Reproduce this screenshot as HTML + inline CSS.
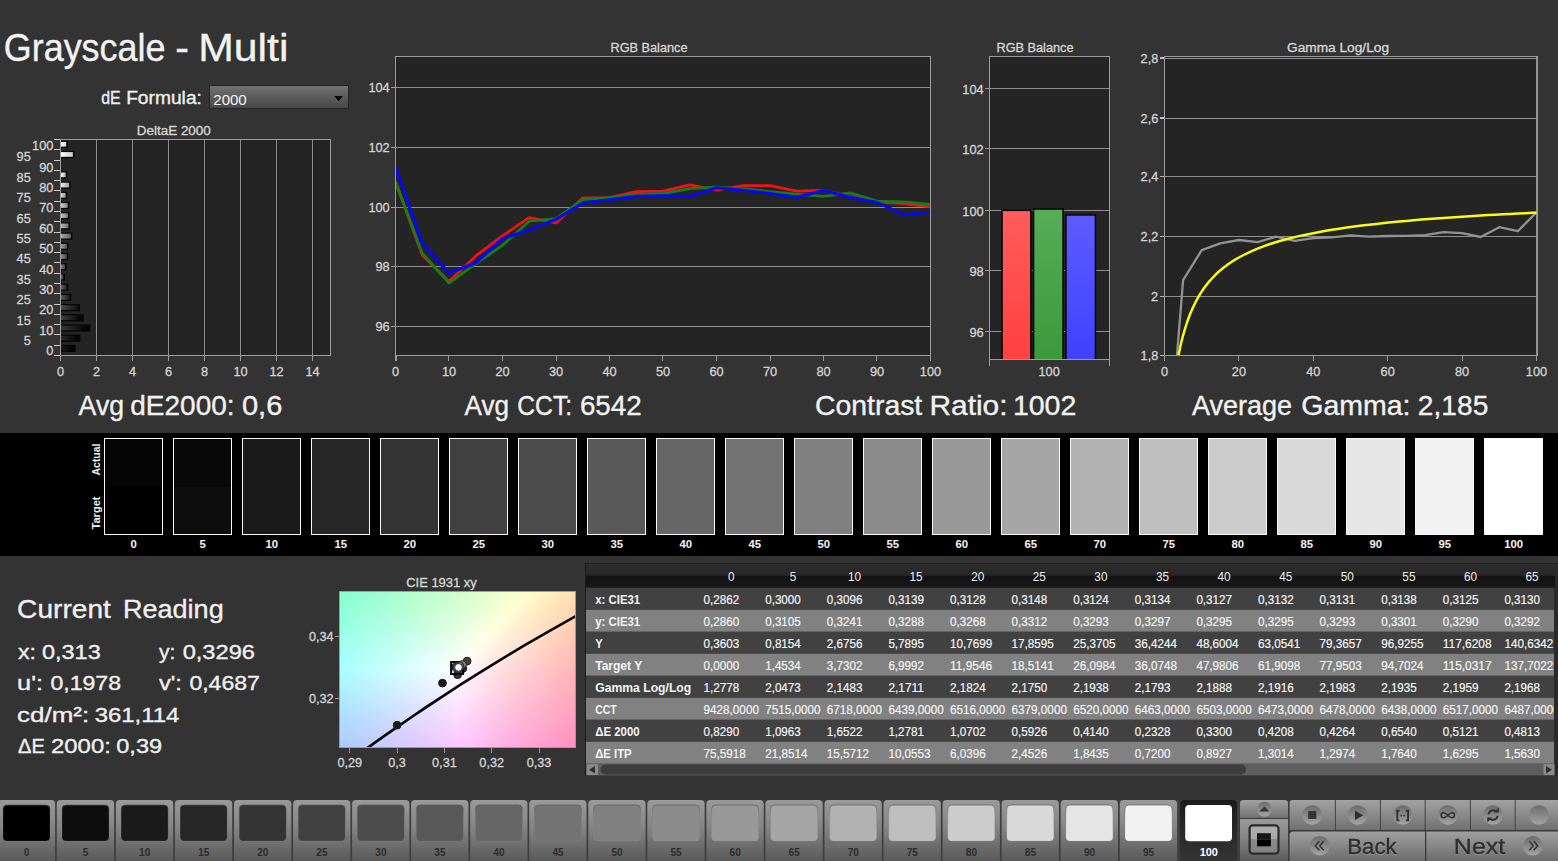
<!DOCTYPE html>
<html lang="en"><head><meta charset="utf-8"><title>Grayscale - Multi</title>
<style>html,body{margin:0;padding:0;background:#333333;overflow:hidden}body{width:1558px;height:861px;font-family:"Liberation Sans", sans-serif}svg{display:block;font-family:"Liberation Sans", sans-serif}</style></head><body>
<svg width="1558" height="861" viewBox="0 0 1558 861">
<defs>
<linearGradient id="gdd" x1="0" y1="0" x2="0" y2="1"><stop offset="0" stop-color="#727272"/><stop offset="1" stop-color="#464646"/></linearGradient>
<linearGradient id="gr" x1="0" y1="0" x2="0" y2="1"><stop offset="0" stop-color="#ff5c5c"/><stop offset="1" stop-color="#ff4040"/></linearGradient>
<linearGradient id="gg" x1="0" y1="0" x2="0" y2="1"><stop offset="0" stop-color="#58ac58"/><stop offset="1" stop-color="#3a9a3a"/></linearGradient>
<linearGradient id="gb" x1="0" y1="0" x2="0" y2="1"><stop offset="0" stop-color="#5c5cff"/><stop offset="1" stop-color="#4040ff"/></linearGradient>
<linearGradient id="gbtn" x1="0" y1="0" x2="0" y2="1"><stop offset="0" stop-color="#9a9a9a"/><stop offset="0.45" stop-color="#848484"/><stop offset="1" stop-color="#5a5a5a"/></linearGradient>
<linearGradient id="gbtn2" x1="0" y1="0" x2="0" y2="1"><stop offset="0" stop-color="#8e8e8e"/><stop offset="1" stop-color="#666666"/></linearGradient>
<linearGradient id="gsel" x1="0" y1="0" x2="0" y2="1"><stop offset="0" stop-color="#1c1c1c"/><stop offset="1" stop-color="#343434"/></linearGradient>
<linearGradient id="ghead" x1="0" y1="0" x2="0" y2="1"><stop offset="0" stop-color="#2e2e2e"/><stop offset="0.48" stop-color="#262626"/><stop offset="0.52" stop-color="#121212"/><stop offset="1" stop-color="#181818"/></linearGradient>
<linearGradient id="gcirc" x1="0" y1="0" x2="0" y2="1"><stop offset="0" stop-color="#6c6c6c"/><stop offset="1" stop-color="#a4a4a4"/></linearGradient>
<linearGradient id="gbtnT" x1="0" y1="0" x2="0" y2="1"><stop offset="0" stop-color="#a2a2a2"/><stop offset="1" stop-color="#707070"/></linearGradient>
<linearGradient id="gbtnB" x1="0" y1="0" x2="0" y2="1"><stop offset="0" stop-color="#a0a0a0"/><stop offset="1" stop-color="#6c6c6c"/></linearGradient>
<linearGradient id="gstop" x1="0" y1="0" x2="0" y2="1"><stop offset="0" stop-color="#b0b0b0"/><stop offset="0.5" stop-color="#a6a6a6"/><stop offset="0.5" stop-color="#8a8a8a"/><stop offset="1" stop-color="#828282"/></linearGradient>
<linearGradient id="gins" x1="0" y1="0" x2="0" y2="1"><stop offset="0" stop-color="#555" stop-opacity="0.7"/><stop offset="0.3" stop-color="#777" stop-opacity="0.3"/><stop offset="1" stop-color="#999" stop-opacity="0.15"/></linearGradient>
<linearGradient id="cieH" x1="0" y1="0" x2="1" y2="0"><stop offset="0" stop-color="#8cf6d2"/><stop offset="0.45" stop-color="#e6ffe6"/><stop offset="0.7" stop-color="#ffffd8"/><stop offset="1" stop-color="#ffe2b8"/></linearGradient>
<linearGradient id="cieB" x1="0" y1="0" x2="1" y2="0"><stop offset="0" stop-color="#a6c8ff"/><stop offset="0.5" stop-color="#f4c8ff"/><stop offset="1" stop-color="#ff86a8"/></linearGradient>
<linearGradient id="cieM" x1="0" y1="0" x2="0" y2="1"><stop offset="0" stop-color="#fff" stop-opacity="0"/><stop offset="0.5" stop-color="#fff" stop-opacity="1"/><stop offset="1" stop-color="#fff" stop-opacity="0"/></linearGradient>
<linearGradient id="cieV" x1="0" y1="0" x2="0" y2="1"><stop offset="0" stop-color="#fff"/><stop offset="1" stop-color="#000"/></linearGradient>
<mask id="mTop"><rect x="340" y="592" width="236" height="156" fill="url(#cieV)"/></mask>
<radialGradient id="cieW" cx="0.5" cy="0.52" r="0.45"><stop offset="0" stop-color="#fff" stop-opacity="1"/><stop offset="0.25" stop-color="#fff" stop-opacity="0.85"/><stop offset="1" stop-color="#fff" stop-opacity="0"/></radialGradient>
<clipPath id="cRGB"><rect x="396" y="57" width="534" height="298"/></clipPath>
<clipPath id="cGAM"><rect x="1165" y="57" width="372" height="298"/></clipPath>
<clipPath id="cCIE"><rect x="340" y="592" width="235.5" height="155.5"/></clipPath>
<filter id="sh" x="-10%" y="-20%" width="120%" height="150%" color-interpolation-filters="sRGB"><feDropShadow dx="0" dy="0.9" stdDeviation="0.15" flood-color="#b8b8b8" flood-opacity="0.6"/></filter>
</defs>
<rect x="0.00" y="0.00" width="1558.00" height="861.00" fill="#333333" />
<text y="61.0" font-size="38" fill="#f2f2f2" stroke="#f2f2f2" stroke-width="0.35"><tspan x="3.75" textLength="161.75" lengthAdjust="spacingAndGlyphs">Grayscale</tspan> <tspan x="175.20" textLength="13.70" lengthAdjust="spacingAndGlyphs">-</tspan> <tspan x="198.15" textLength="90.25" lengthAdjust="spacingAndGlyphs">Multi</tspan></text>
<text y="104.3" font-size="18" fill="#f0f0f0" stroke="#f0f0f0" stroke-width="0.35"><tspan x="101.20" textLength="19.40" lengthAdjust="spacingAndGlyphs">dE</tspan> <tspan x="126.15" textLength="75.75" lengthAdjust="spacingAndGlyphs">Formula:</tspan></text>
<rect x="209.50" y="85.50" width="138.50" height="23.00" fill="url(#gdd)" stroke="#262626" stroke-width="1" shape-rendering="crispEdges"/>
<text x="213.3" y="104.8" font-size="14.6" fill="#f4f4f4" textLength="33.4" lengthAdjust="spacingAndGlyphs">2000</text>
<path d="M334.3 96h8.600l-4.300 5.200z" fill="#060606"/>
<text x="173.8" y="134.8" font-size="12" fill="#d6d6d6" text-anchor="middle" textLength="74.0" lengthAdjust="spacingAndGlyphs" stroke="#d6d6d6" stroke-width="0.3">DeltaE 2000</text>
<rect x="60.50" y="139.50" width="270.00" height="216.00" fill="#242424" />
<g shape-rendering="crispEdges">
<line x1="96.50" y1="139.50" x2="96.50" y2="355.50" stroke="#8e8e8e" stroke-width="1" />
<line x1="132.50" y1="139.50" x2="132.50" y2="355.50" stroke="#8e8e8e" stroke-width="1" />
<line x1="168.50" y1="139.50" x2="168.50" y2="355.50" stroke="#8e8e8e" stroke-width="1" />
<line x1="204.50" y1="139.50" x2="204.50" y2="355.50" stroke="#8e8e8e" stroke-width="1" />
<line x1="240.50" y1="139.50" x2="240.50" y2="355.50" stroke="#8e8e8e" stroke-width="1" />
<line x1="276.50" y1="139.50" x2="276.50" y2="355.50" stroke="#8e8e8e" stroke-width="1" />
<line x1="312.50" y1="139.50" x2="312.50" y2="355.50" stroke="#8e8e8e" stroke-width="1" />
<rect x="60.50" y="139.50" width="270.00" height="216.00" fill="none" stroke="#9c9c9c" stroke-width="1"/>
<line x1="60.50" y1="355.50" x2="60.50" y2="361.00" stroke="#9c9c9c" stroke-width="1" />
<line x1="96.50" y1="355.50" x2="96.50" y2="361.00" stroke="#9c9c9c" stroke-width="1" />
<line x1="132.50" y1="355.50" x2="132.50" y2="361.00" stroke="#9c9c9c" stroke-width="1" />
<line x1="168.50" y1="355.50" x2="168.50" y2="361.00" stroke="#9c9c9c" stroke-width="1" />
<line x1="204.50" y1="355.50" x2="204.50" y2="361.00" stroke="#9c9c9c" stroke-width="1" />
<line x1="240.50" y1="355.50" x2="240.50" y2="361.00" stroke="#9c9c9c" stroke-width="1" />
<line x1="276.50" y1="355.50" x2="276.50" y2="361.00" stroke="#9c9c9c" stroke-width="1" />
<line x1="312.50" y1="355.50" x2="312.50" y2="361.00" stroke="#9c9c9c" stroke-width="1" />
<line x1="54.00" y1="355.50" x2="60.00" y2="355.50" stroke="#c8c8c8" stroke-width="1" />
<line x1="54.00" y1="345.50" x2="60.00" y2="345.50" stroke="#c8c8c8" stroke-width="1" />
<line x1="54.00" y1="334.50" x2="60.00" y2="334.50" stroke="#c8c8c8" stroke-width="1" />
<line x1="54.00" y1="324.50" x2="60.00" y2="324.50" stroke="#c8c8c8" stroke-width="1" />
<line x1="54.00" y1="314.50" x2="60.00" y2="314.50" stroke="#c8c8c8" stroke-width="1" />
<line x1="54.00" y1="304.50" x2="60.00" y2="304.50" stroke="#c8c8c8" stroke-width="1" />
<line x1="54.00" y1="293.50" x2="60.00" y2="293.50" stroke="#c8c8c8" stroke-width="1" />
<line x1="54.00" y1="283.50" x2="60.00" y2="283.50" stroke="#c8c8c8" stroke-width="1" />
<line x1="54.00" y1="273.50" x2="60.00" y2="273.50" stroke="#c8c8c8" stroke-width="1" />
<line x1="54.00" y1="262.50" x2="60.00" y2="262.50" stroke="#c8c8c8" stroke-width="1" />
<line x1="54.00" y1="252.50" x2="60.00" y2="252.50" stroke="#c8c8c8" stroke-width="1" />
<line x1="54.00" y1="242.50" x2="60.00" y2="242.50" stroke="#c8c8c8" stroke-width="1" />
<line x1="54.00" y1="232.50" x2="60.00" y2="232.50" stroke="#c8c8c8" stroke-width="1" />
<line x1="54.00" y1="221.50" x2="60.00" y2="221.50" stroke="#c8c8c8" stroke-width="1" />
<line x1="54.00" y1="211.50" x2="60.00" y2="211.50" stroke="#c8c8c8" stroke-width="1" />
<line x1="54.00" y1="201.50" x2="60.00" y2="201.50" stroke="#c8c8c8" stroke-width="1" />
<line x1="54.00" y1="190.50" x2="60.00" y2="190.50" stroke="#c8c8c8" stroke-width="1" />
<line x1="54.00" y1="180.50" x2="60.00" y2="180.50" stroke="#c8c8c8" stroke-width="1" />
<line x1="54.00" y1="170.50" x2="60.00" y2="170.50" stroke="#c8c8c8" stroke-width="1" />
<line x1="54.00" y1="160.50" x2="60.00" y2="160.50" stroke="#c8c8c8" stroke-width="1" />
<line x1="54.00" y1="149.50" x2="60.00" y2="149.50" stroke="#c8c8c8" stroke-width="1" />
<line x1="54.00" y1="139.50" x2="60.00" y2="139.50" stroke="#c8c8c8" stroke-width="1" />
</g>
<text x="60.5" y="375.7" font-size="12.4" fill="#d4d4d4" text-anchor="middle" textLength="7.1" lengthAdjust="spacingAndGlyphs" stroke="#d4d4d4" stroke-width="0.3">0</text>
<text x="96.5" y="375.7" font-size="12.4" fill="#d4d4d4" text-anchor="middle" textLength="7.1" lengthAdjust="spacingAndGlyphs" stroke="#d4d4d4" stroke-width="0.3">2</text>
<text x="132.5" y="375.7" font-size="12.4" fill="#d4d4d4" text-anchor="middle" textLength="7.1" lengthAdjust="spacingAndGlyphs" stroke="#d4d4d4" stroke-width="0.3">4</text>
<text x="168.5" y="375.7" font-size="12.4" fill="#d4d4d4" text-anchor="middle" textLength="7.1" lengthAdjust="spacingAndGlyphs" stroke="#d4d4d4" stroke-width="0.3">6</text>
<text x="204.5" y="375.7" font-size="12.4" fill="#d4d4d4" text-anchor="middle" textLength="7.1" lengthAdjust="spacingAndGlyphs" stroke="#d4d4d4" stroke-width="0.3">8</text>
<text x="240.5" y="375.7" font-size="12.4" fill="#d4d4d4" text-anchor="middle" textLength="14.2" lengthAdjust="spacingAndGlyphs" stroke="#d4d4d4" stroke-width="0.3">10</text>
<text x="276.5" y="375.7" font-size="12.4" fill="#d4d4d4" text-anchor="middle" textLength="14.2" lengthAdjust="spacingAndGlyphs" stroke="#d4d4d4" stroke-width="0.3">12</text>
<text x="312.5" y="375.7" font-size="12.4" fill="#d4d4d4" text-anchor="middle" textLength="14.2" lengthAdjust="spacingAndGlyphs" stroke="#d4d4d4" stroke-width="0.3">14</text>
<linearGradient id="db0" x1="0" y1="0" x2="1" y2="0"><stop offset="0" stop-color="rgb(28,28,28)"/><stop offset="1" stop-color="rgb(0,0,0)"/></linearGradient>
<rect x="61.00" y="344.80" width="14.62" height="7.20" fill="#050505" />
<rect x="61.00" y="346.00" width="13.12" height="4.70" fill="url(#db0)" />
<text x="53.4" y="355.1" font-size="12.4" fill="#d4d4d4" text-anchor="end" textLength="7.1" lengthAdjust="spacingAndGlyphs" stroke="#d4d4d4" stroke-width="0.3">0</text>
<linearGradient id="db1" x1="0" y1="0" x2="1" y2="0"><stop offset="0" stop-color="rgb(41,41,41)"/><stop offset="1" stop-color="rgb(0,0,0)"/></linearGradient>
<rect x="61.00" y="334.59" width="19.43" height="7.20" fill="#050505" />
<rect x="61.00" y="335.80" width="17.93" height="4.70" fill="url(#db1)" />
<text x="30.8" y="344.9" font-size="12.4" fill="#d4d4d4" text-anchor="end" textLength="7.1" lengthAdjust="spacingAndGlyphs" stroke="#d4d4d4" stroke-width="0.3">5</text>
<linearGradient id="db2" x1="0" y1="0" x2="1" y2="0"><stop offset="0" stop-color="rgb(54,54,54)"/><stop offset="1" stop-color="rgb(0,0,0)"/></linearGradient>
<rect x="61.00" y="324.39" width="29.44" height="7.20" fill="#050505" />
<rect x="61.00" y="325.59" width="27.94" height="4.70" fill="url(#db2)" />
<text x="53.4" y="334.7" font-size="12.4" fill="#d4d4d4" text-anchor="end" textLength="14.2" lengthAdjust="spacingAndGlyphs" stroke="#d4d4d4" stroke-width="0.3">10</text>
<linearGradient id="db3" x1="0" y1="0" x2="1" y2="0"><stop offset="0" stop-color="rgb(66,66,66)"/><stop offset="1" stop-color="rgb(0,0,0)"/></linearGradient>
<rect x="61.00" y="314.18" width="22.71" height="7.20" fill="#050505" />
<rect x="61.00" y="315.38" width="21.21" height="4.70" fill="url(#db3)" />
<text x="30.8" y="324.5" font-size="12.4" fill="#d4d4d4" text-anchor="end" textLength="14.2" lengthAdjust="spacingAndGlyphs" stroke="#d4d4d4" stroke-width="0.3">15</text>
<linearGradient id="db4" x1="0" y1="0" x2="1" y2="0"><stop offset="0" stop-color="rgb(79,79,79)"/><stop offset="1" stop-color="rgb(11,11,11)"/></linearGradient>
<rect x="61.00" y="303.98" width="18.96" height="7.20" fill="#050505" />
<rect x="61.00" y="305.18" width="17.46" height="4.70" fill="url(#db4)" />
<text x="53.4" y="314.3" font-size="12.4" fill="#d4d4d4" text-anchor="end" textLength="14.2" lengthAdjust="spacingAndGlyphs" stroke="#d4d4d4" stroke-width="0.3">20</text>
<linearGradient id="db5" x1="0" y1="0" x2="1" y2="0"><stop offset="0" stop-color="rgb(92,92,92)"/><stop offset="1" stop-color="rgb(24,24,24)"/></linearGradient>
<rect x="61.00" y="293.77" width="10.37" height="7.20" fill="#050505" />
<rect x="61.00" y="294.98" width="8.87" height="4.70" fill="url(#db5)" />
<text x="30.8" y="304.1" font-size="12.4" fill="#d4d4d4" text-anchor="end" textLength="14.2" lengthAdjust="spacingAndGlyphs" stroke="#d4d4d4" stroke-width="0.3">25</text>
<linearGradient id="db6" x1="0" y1="0" x2="1" y2="0"><stop offset="0" stop-color="rgb(104,104,104)"/><stop offset="1" stop-color="rgb(36,36,36)"/></linearGradient>
<rect x="61.00" y="283.57" width="7.15" height="7.20" fill="#050505" />
<rect x="61.00" y="284.77" width="5.65" height="4.70" fill="url(#db6)" />
<text x="53.4" y="293.9" font-size="12.4" fill="#d4d4d4" text-anchor="end" textLength="14.2" lengthAdjust="spacingAndGlyphs" stroke="#d4d4d4" stroke-width="0.3">30</text>
<linearGradient id="db7" x1="0" y1="0" x2="1" y2="0"><stop offset="0" stop-color="rgb(117,117,117)"/><stop offset="1" stop-color="rgb(49,49,49)"/></linearGradient>
<rect x="61.00" y="273.36" width="3.89" height="7.20" fill="#050505" />
<rect x="61.00" y="274.56" width="2.39" height="4.70" fill="url(#db7)" />
<text x="30.8" y="283.7" font-size="12.4" fill="#d4d4d4" text-anchor="end" textLength="14.2" lengthAdjust="spacingAndGlyphs" stroke="#d4d4d4" stroke-width="0.3">35</text>
<linearGradient id="db8" x1="0" y1="0" x2="1" y2="0"><stop offset="0" stop-color="rgb(130,130,130)"/><stop offset="1" stop-color="rgb(62,62,62)"/></linearGradient>
<rect x="61.00" y="263.16" width="5.64" height="7.20" fill="#050505" />
<rect x="61.00" y="264.36" width="4.14" height="4.70" fill="url(#db8)" />
<text x="53.4" y="273.5" font-size="12.4" fill="#d4d4d4" text-anchor="end" textLength="14.2" lengthAdjust="spacingAndGlyphs" stroke="#d4d4d4" stroke-width="0.3">40</text>
<linearGradient id="db9" x1="0" y1="0" x2="1" y2="0"><stop offset="0" stop-color="rgb(143,143,143)"/><stop offset="1" stop-color="rgb(75,75,75)"/></linearGradient>
<rect x="61.00" y="252.95" width="7.27" height="7.20" fill="#050505" />
<rect x="61.00" y="254.15" width="5.77" height="4.70" fill="url(#db9)" />
<text x="30.8" y="263.3" font-size="12.4" fill="#d4d4d4" text-anchor="end" textLength="14.2" lengthAdjust="spacingAndGlyphs" stroke="#d4d4d4" stroke-width="0.3">45</text>
<linearGradient id="db10" x1="0" y1="0" x2="1" y2="0"><stop offset="0" stop-color="rgb(156,156,156)"/><stop offset="1" stop-color="rgb(88,88,88)"/></linearGradient>
<rect x="61.00" y="242.75" width="7.38" height="7.20" fill="#050505" />
<rect x="61.00" y="243.95" width="5.88" height="4.70" fill="url(#db10)" />
<text x="53.4" y="253.1" font-size="12.4" fill="#d4d4d4" text-anchor="end" textLength="14.2" lengthAdjust="spacingAndGlyphs" stroke="#d4d4d4" stroke-width="0.3">50</text>
<linearGradient id="db11" x1="0" y1="0" x2="1" y2="0"><stop offset="0" stop-color="rgb(168,168,168)"/><stop offset="1" stop-color="rgb(100,100,100)"/></linearGradient>
<rect x="61.00" y="232.54" width="11.47" height="7.20" fill="#050505" />
<rect x="61.00" y="233.74" width="9.97" height="4.70" fill="url(#db11)" />
<text x="30.8" y="242.9" font-size="12.4" fill="#d4d4d4" text-anchor="end" textLength="14.2" lengthAdjust="spacingAndGlyphs" stroke="#d4d4d4" stroke-width="0.3">55</text>
<linearGradient id="db12" x1="0" y1="0" x2="1" y2="0"><stop offset="0" stop-color="rgb(181,181,181)"/><stop offset="1" stop-color="rgb(113,113,113)"/></linearGradient>
<rect x="61.00" y="222.34" width="8.92" height="7.20" fill="#050505" />
<rect x="61.00" y="223.54" width="7.42" height="4.70" fill="url(#db12)" />
<text x="53.4" y="232.7" font-size="12.4" fill="#d4d4d4" text-anchor="end" textLength="14.2" lengthAdjust="spacingAndGlyphs" stroke="#d4d4d4" stroke-width="0.3">60</text>
<linearGradient id="db13" x1="0" y1="0" x2="1" y2="0"><stop offset="0" stop-color="rgb(194,194,194)"/><stop offset="1" stop-color="rgb(126,126,126)"/></linearGradient>
<rect x="61.00" y="212.13" width="8.36" height="7.20" fill="#050505" />
<rect x="61.00" y="213.33" width="6.86" height="4.70" fill="url(#db13)" />
<text x="30.8" y="222.5" font-size="12.4" fill="#d4d4d4" text-anchor="end" textLength="14.2" lengthAdjust="spacingAndGlyphs" stroke="#d4d4d4" stroke-width="0.3">65</text>
<linearGradient id="db14" x1="0" y1="0" x2="1" y2="0"><stop offset="0" stop-color="rgb(206,206,206)"/><stop offset="1" stop-color="rgb(138,138,138)"/></linearGradient>
<rect x="61.00" y="201.93" width="8.16" height="7.20" fill="#050505" />
<rect x="61.00" y="203.13" width="6.66" height="4.70" fill="url(#db14)" />
<text x="53.4" y="212.3" font-size="12.4" fill="#d4d4d4" text-anchor="end" textLength="14.2" lengthAdjust="spacingAndGlyphs" stroke="#d4d4d4" stroke-width="0.3">70</text>
<linearGradient id="db15" x1="0" y1="0" x2="1" y2="0"><stop offset="0" stop-color="rgb(219,219,219)"/><stop offset="1" stop-color="rgb(151,151,151)"/></linearGradient>
<rect x="61.00" y="191.72" width="6.18" height="7.20" fill="#050505" />
<rect x="61.00" y="192.92" width="4.68" height="4.70" fill="url(#db15)" />
<text x="30.8" y="202.1" font-size="12.4" fill="#d4d4d4" text-anchor="end" textLength="14.2" lengthAdjust="spacingAndGlyphs" stroke="#d4d4d4" stroke-width="0.3">75</text>
<linearGradient id="db16" x1="0" y1="0" x2="1" y2="0"><stop offset="0" stop-color="rgb(232,232,232)"/><stop offset="1" stop-color="rgb(164,164,164)"/></linearGradient>
<rect x="61.00" y="181.52" width="9.60" height="7.20" fill="#050505" />
<rect x="61.00" y="182.72" width="8.10" height="4.70" fill="url(#db16)" />
<text x="53.4" y="191.9" font-size="12.4" fill="#d4d4d4" text-anchor="end" textLength="14.2" lengthAdjust="spacingAndGlyphs" stroke="#d4d4d4" stroke-width="0.3">80</text>
<linearGradient id="db17" x1="0" y1="0" x2="1" y2="0"><stop offset="0" stop-color="rgb(245,245,245)"/><stop offset="1" stop-color="rgb(177,177,177)"/></linearGradient>
<rect x="61.00" y="171.31" width="6.18" height="7.20" fill="#050505" />
<rect x="61.00" y="172.51" width="4.68" height="4.70" fill="url(#db17)" />
<text x="30.8" y="181.7" font-size="12.4" fill="#d4d4d4" text-anchor="end" textLength="14.2" lengthAdjust="spacingAndGlyphs" stroke="#d4d4d4" stroke-width="0.3">85</text>
<linearGradient id="db18" x1="0" y1="0" x2="1" y2="0"><stop offset="0" stop-color="rgb(255,255,255)"/><stop offset="1" stop-color="rgb(190,190,190)"/></linearGradient>
<text x="53.4" y="171.5" font-size="12.4" fill="#d4d4d4" text-anchor="end" textLength="14.2" lengthAdjust="spacingAndGlyphs" stroke="#d4d4d4" stroke-width="0.3">90</text>
<linearGradient id="db19" x1="0" y1="0" x2="1" y2="0"><stop offset="0" stop-color="rgb(255,255,255)"/><stop offset="1" stop-color="rgb(202,202,202)"/></linearGradient>
<rect x="61.00" y="150.90" width="13.38" height="7.20" fill="#050505" />
<rect x="61.00" y="152.10" width="11.88" height="4.70" fill="url(#db19)" />
<text x="30.8" y="161.3" font-size="12.4" fill="#d4d4d4" text-anchor="end" textLength="14.2" lengthAdjust="spacingAndGlyphs" stroke="#d4d4d4" stroke-width="0.3">95</text>
<linearGradient id="db20" x1="0" y1="0" x2="1" y2="0"><stop offset="0" stop-color="rgb(255,255,255)"/><stop offset="1" stop-color="rgb(215,215,215)"/></linearGradient>
<rect x="61.00" y="140.70" width="6.72" height="7.20" fill="#050505" />
<rect x="61.00" y="141.90" width="5.22" height="4.70" fill="url(#db20)" />
<text x="53.4" y="149.9" font-size="12.4" fill="#d4d4d4" text-anchor="end" textLength="21.3" lengthAdjust="spacingAndGlyphs" stroke="#d4d4d4" stroke-width="0.3">100</text>
<text x="649.0" y="51.7" font-size="12" fill="#d6d6d6" text-anchor="middle" textLength="77.0" lengthAdjust="spacingAndGlyphs" stroke="#d6d6d6" stroke-width="0.3">RGB Balance</text>
<rect x="395.50" y="56.50" width="535.00" height="299.00" fill="#242424" />
<g shape-rendering="crispEdges">
<line x1="395.50" y1="326.50" x2="930.50" y2="326.50" stroke="#8e8e8e" stroke-width="1" />
<line x1="390.50" y1="326.50" x2="395.50" y2="326.50" stroke="#9c9c9c" stroke-width="1" />
<line x1="395.50" y1="266.50" x2="930.50" y2="266.50" stroke="#8e8e8e" stroke-width="1" />
<line x1="390.50" y1="266.50" x2="395.50" y2="266.50" stroke="#9c9c9c" stroke-width="1" />
<line x1="395.50" y1="207.50" x2="930.50" y2="207.50" stroke="#8e8e8e" stroke-width="1" />
<line x1="390.50" y1="207.50" x2="395.50" y2="207.50" stroke="#9c9c9c" stroke-width="1" />
<line x1="395.50" y1="147.50" x2="930.50" y2="147.50" stroke="#8e8e8e" stroke-width="1" />
<line x1="390.50" y1="147.50" x2="395.50" y2="147.50" stroke="#9c9c9c" stroke-width="1" />
<line x1="395.50" y1="87.50" x2="930.50" y2="87.50" stroke="#8e8e8e" stroke-width="1" />
<line x1="390.50" y1="87.50" x2="395.50" y2="87.50" stroke="#9c9c9c" stroke-width="1" />
</g>
<text x="389.7" y="330.9" font-size="12.4" fill="#d4d4d4" text-anchor="end" textLength="14.2" lengthAdjust="spacingAndGlyphs" stroke="#d4d4d4" stroke-width="0.3">96</text>
<text x="389.7" y="270.9" font-size="12.4" fill="#d4d4d4" text-anchor="end" textLength="14.2" lengthAdjust="spacingAndGlyphs" stroke="#d4d4d4" stroke-width="0.3">98</text>
<text x="389.7" y="211.9" font-size="12.4" fill="#d4d4d4" text-anchor="end" textLength="21.3" lengthAdjust="spacingAndGlyphs" stroke="#d4d4d4" stroke-width="0.3">100</text>
<text x="389.7" y="151.9" font-size="12.4" fill="#d4d4d4" text-anchor="end" textLength="21.3" lengthAdjust="spacingAndGlyphs" stroke="#d4d4d4" stroke-width="0.3">102</text>
<text x="389.7" y="91.9" font-size="12.4" fill="#d4d4d4" text-anchor="end" textLength="21.3" lengthAdjust="spacingAndGlyphs" stroke="#d4d4d4" stroke-width="0.3">104</text>
<polyline points="395.5,181.8 422.2,255.0 449.0,281.6 475.8,255.9 502.5,235.9 529.2,217.7 556.0,223.0 582.8,197.9 609.5,197.6 636.2,191.7 663.0,191.1 689.8,184.8 716.5,190.2 743.2,185.7 770.0,185.7 796.8,191.1 823.5,190.5 850.2,196.4 877.0,202.1 903.8,203.6 930.5,206.9" fill="none" stroke="#f21212" stroke-width="2.8" stroke-linejoin="round" clip-path="url(#cRGB)"/>
<polyline points="395.5,181.8 422.2,253.2 449.0,283.1 475.8,263.7 502.5,245.4 529.2,221.2 556.0,218.6 582.8,199.7 609.5,197.6 636.2,194.4 663.0,193.5 689.8,188.7 716.5,187.2 743.2,188.7 770.0,191.7 796.8,194.1 823.5,196.4 850.2,192.9 877.0,201.2 903.8,201.8 930.5,204.5" fill="none" stroke="#187c18" stroke-width="2.8" stroke-linejoin="round" clip-path="url(#cRGB)"/>
<polyline points="395.5,166.9 422.2,243.3 449.0,273.2 475.8,262.8 502.5,238.6 529.2,229.9 556.0,219.4 582.8,203.0 609.5,199.7 636.2,196.4 663.0,195.9 689.8,196.4 716.5,187.8 743.2,190.2 770.0,193.5 796.8,197.3 823.5,190.5 850.2,197.3 877.0,202.4 903.8,214.7 930.5,212.0" fill="none" stroke="#0808f0" stroke-width="3.1" stroke-linejoin="round" clip-path="url(#cRGB)"/>
<g shape-rendering="crispEdges">
<rect x="395.50" y="56.50" width="535.00" height="299.00" fill="none" stroke="#9c9c9c" stroke-width="1"/>
<line x1="395.50" y1="355.50" x2="395.50" y2="361.00" stroke="#9c9c9c" stroke-width="1" />
<line x1="448.50" y1="355.50" x2="448.50" y2="361.00" stroke="#9c9c9c" stroke-width="1" />
<line x1="502.50" y1="355.50" x2="502.50" y2="361.00" stroke="#9c9c9c" stroke-width="1" />
<line x1="556.50" y1="355.50" x2="556.50" y2="361.00" stroke="#9c9c9c" stroke-width="1" />
<line x1="609.50" y1="355.50" x2="609.50" y2="361.00" stroke="#9c9c9c" stroke-width="1" />
<line x1="662.50" y1="355.50" x2="662.50" y2="361.00" stroke="#9c9c9c" stroke-width="1" />
<line x1="716.50" y1="355.50" x2="716.50" y2="361.00" stroke="#9c9c9c" stroke-width="1" />
<line x1="770.50" y1="355.50" x2="770.50" y2="361.00" stroke="#9c9c9c" stroke-width="1" />
<line x1="823.50" y1="355.50" x2="823.50" y2="361.00" stroke="#9c9c9c" stroke-width="1" />
<line x1="876.50" y1="355.50" x2="876.50" y2="361.00" stroke="#9c9c9c" stroke-width="1" />
<line x1="930.50" y1="355.50" x2="930.50" y2="361.00" stroke="#9c9c9c" stroke-width="1" />
<line x1="396.50" y1="355.50" x2="396.50" y2="361.00" stroke="#9c9c9c" stroke-width="1" />
</g>
<text x="395.5" y="375.7" font-size="12.4" fill="#d4d4d4" text-anchor="middle" textLength="7.1" lengthAdjust="spacingAndGlyphs" stroke="#d4d4d4" stroke-width="0.3">0</text>
<text x="449.0" y="375.7" font-size="12.4" fill="#d4d4d4" text-anchor="middle" textLength="14.2" lengthAdjust="spacingAndGlyphs" stroke="#d4d4d4" stroke-width="0.3">10</text>
<text x="502.5" y="375.7" font-size="12.4" fill="#d4d4d4" text-anchor="middle" textLength="14.2" lengthAdjust="spacingAndGlyphs" stroke="#d4d4d4" stroke-width="0.3">20</text>
<text x="556.0" y="375.7" font-size="12.4" fill="#d4d4d4" text-anchor="middle" textLength="14.2" lengthAdjust="spacingAndGlyphs" stroke="#d4d4d4" stroke-width="0.3">30</text>
<text x="609.5" y="375.7" font-size="12.4" fill="#d4d4d4" text-anchor="middle" textLength="14.2" lengthAdjust="spacingAndGlyphs" stroke="#d4d4d4" stroke-width="0.3">40</text>
<text x="663.0" y="375.7" font-size="12.4" fill="#d4d4d4" text-anchor="middle" textLength="14.2" lengthAdjust="spacingAndGlyphs" stroke="#d4d4d4" stroke-width="0.3">50</text>
<text x="716.5" y="375.7" font-size="12.4" fill="#d4d4d4" text-anchor="middle" textLength="14.2" lengthAdjust="spacingAndGlyphs" stroke="#d4d4d4" stroke-width="0.3">60</text>
<text x="770.0" y="375.7" font-size="12.4" fill="#d4d4d4" text-anchor="middle" textLength="14.2" lengthAdjust="spacingAndGlyphs" stroke="#d4d4d4" stroke-width="0.3">70</text>
<text x="823.5" y="375.7" font-size="12.4" fill="#d4d4d4" text-anchor="middle" textLength="14.2" lengthAdjust="spacingAndGlyphs" stroke="#d4d4d4" stroke-width="0.3">80</text>
<text x="877.0" y="375.7" font-size="12.4" fill="#d4d4d4" text-anchor="middle" textLength="14.2" lengthAdjust="spacingAndGlyphs" stroke="#d4d4d4" stroke-width="0.3">90</text>
<text x="930.5" y="375.7" font-size="12.4" fill="#d4d4d4" text-anchor="middle" textLength="21.3" lengthAdjust="spacingAndGlyphs" stroke="#d4d4d4" stroke-width="0.3">100</text>
<text x="1035.0" y="51.7" font-size="12" fill="#d6d6d6" text-anchor="middle" textLength="77.0" lengthAdjust="spacingAndGlyphs" stroke="#d6d6d6" stroke-width="0.3">RGB Balance</text>
<rect x="989.50" y="56.50" width="120.00" height="303.00" fill="#242424" />
<g shape-rendering="crispEdges">
<line x1="989.50" y1="331.50" x2="1109.50" y2="331.50" stroke="#8e8e8e" stroke-width="1" />
<line x1="984.50" y1="331.50" x2="989.50" y2="331.50" stroke="#9c9c9c" stroke-width="1" />
<line x1="989.50" y1="270.50" x2="1109.50" y2="270.50" stroke="#8e8e8e" stroke-width="1" />
<line x1="984.50" y1="270.50" x2="989.50" y2="270.50" stroke="#9c9c9c" stroke-width="1" />
<line x1="989.50" y1="210.50" x2="1109.50" y2="210.50" stroke="#8e8e8e" stroke-width="1" />
<line x1="984.50" y1="210.50" x2="989.50" y2="210.50" stroke="#9c9c9c" stroke-width="1" />
<line x1="989.50" y1="148.50" x2="1109.50" y2="148.50" stroke="#8e8e8e" stroke-width="1" />
<line x1="984.50" y1="148.50" x2="989.50" y2="148.50" stroke="#9c9c9c" stroke-width="1" />
<line x1="989.50" y1="88.50" x2="1109.50" y2="88.50" stroke="#8e8e8e" stroke-width="1" />
<line x1="984.50" y1="88.50" x2="989.50" y2="88.50" stroke="#9c9c9c" stroke-width="1" />
</g>
<text x="983.6" y="336.7" font-size="12.4" fill="#d4d4d4" text-anchor="end" textLength="14.2" lengthAdjust="spacingAndGlyphs" stroke="#d4d4d4" stroke-width="0.3">96</text>
<text x="983.6" y="275.7" font-size="12.4" fill="#d4d4d4" text-anchor="end" textLength="14.2" lengthAdjust="spacingAndGlyphs" stroke="#d4d4d4" stroke-width="0.3">98</text>
<text x="983.6" y="215.7" font-size="12.4" fill="#d4d4d4" text-anchor="end" textLength="21.3" lengthAdjust="spacingAndGlyphs" stroke="#d4d4d4" stroke-width="0.3">100</text>
<text x="983.6" y="153.7" font-size="12.4" fill="#d4d4d4" text-anchor="end" textLength="21.3" lengthAdjust="spacingAndGlyphs" stroke="#d4d4d4" stroke-width="0.3">102</text>
<text x="983.6" y="93.7" font-size="12.4" fill="#d4d4d4" text-anchor="end" textLength="21.3" lengthAdjust="spacingAndGlyphs" stroke="#d4d4d4" stroke-width="0.3">104</text>
<rect x="1001.30" y="209.60" width="30.30" height="149.90" fill="#050505" />
<rect x="1002.80" y="211.10" width="27.30" height="148.40" fill="url(#gr)" />
<rect x="1032.80" y="208.30" width="31.00" height="151.20" fill="#050505" />
<rect x="1034.30" y="209.80" width="28.00" height="149.70" fill="url(#gg)" />
<rect x="1065.20" y="214.20" width="31.00" height="145.30" fill="#050505" />
<rect x="1066.70" y="215.70" width="28.00" height="143.80" fill="url(#gb)" />
<g shape-rendering="crispEdges">
<rect x="989.50" y="56.50" width="120.00" height="303.00" fill="none" stroke="#9c9c9c" stroke-width="1"/>
<line x1="989.50" y1="359.50" x2="989.50" y2="365.50" stroke="#9c9c9c" stroke-width="1" />
<line x1="1109.50" y1="359.50" x2="1109.50" y2="365.50" stroke="#9c9c9c" stroke-width="1" />
</g>
<text x="1049.1" y="375.8" font-size="12.4" fill="#d4d4d4" text-anchor="middle" textLength="21.3" lengthAdjust="spacingAndGlyphs" stroke="#d4d4d4" stroke-width="0.3">100</text>
<text x="1338.0" y="51.7" font-size="12" fill="#d6d6d6" text-anchor="middle" textLength="102.0" lengthAdjust="spacingAndGlyphs" stroke="#d6d6d6" stroke-width="0.3">Gamma Log/Log</text>
<rect x="1164.50" y="56.50" width="373.00" height="299.00" fill="#242424" />
<g shape-rendering="crispEdges">
<line x1="1164.50" y1="296.50" x2="1537.50" y2="296.50" stroke="#8e8e8e" stroke-width="1" />
<line x1="1164.50" y1="236.50" x2="1537.50" y2="236.50" stroke="#8e8e8e" stroke-width="1" />
<line x1="1164.50" y1="176.50" x2="1537.50" y2="176.50" stroke="#8e8e8e" stroke-width="1" />
<line x1="1164.50" y1="118.50" x2="1537.50" y2="118.50" stroke="#8e8e8e" stroke-width="1" />
<line x1="1164.50" y1="58.50" x2="1537.50" y2="58.50" stroke="#8e8e8e" stroke-width="1" />
<line x1="1159.50" y1="355.50" x2="1164.50" y2="355.50" stroke="#b0b0b0" stroke-width="1" />
<line x1="1159.50" y1="296.50" x2="1164.50" y2="296.50" stroke="#b0b0b0" stroke-width="1" />
<line x1="1159.50" y1="236.50" x2="1164.50" y2="236.50" stroke="#b0b0b0" stroke-width="1" />
<line x1="1159.50" y1="176.50" x2="1164.50" y2="176.50" stroke="#b0b0b0" stroke-width="1" />
<line x1="1159.50" y1="118.00" x2="1164.50" y2="118.00" stroke="#c4c4c4" stroke-width="2" />
<line x1="1159.50" y1="58.00" x2="1164.50" y2="58.00" stroke="#c4c4c4" stroke-width="2" />
<line x1="1536.50" y1="56.50" x2="1536.50" y2="355.50" stroke="#8e8e8e" stroke-width="1" />
</g>
<text x="1158.2" y="301.2" font-size="12.4" fill="#d4d4d4" text-anchor="end" textLength="7.1" lengthAdjust="spacingAndGlyphs" stroke="#d4d4d4" stroke-width="0.3">2</text>
<text x="1158.2" y="241.2" font-size="12.4" fill="#d4d4d4" text-anchor="end" textLength="17.6" lengthAdjust="spacingAndGlyphs" stroke="#d4d4d4" stroke-width="0.3">2,2</text>
<text x="1158.2" y="181.2" font-size="12.4" fill="#d4d4d4" text-anchor="end" textLength="17.6" lengthAdjust="spacingAndGlyphs" stroke="#d4d4d4" stroke-width="0.3">2,4</text>
<text x="1158.2" y="123.2" font-size="12.4" fill="#d4d4d4" text-anchor="end" textLength="17.6" lengthAdjust="spacingAndGlyphs" stroke="#d4d4d4" stroke-width="0.3">2,6</text>
<text x="1158.2" y="63.2" font-size="12.4" fill="#d4d4d4" text-anchor="end" textLength="17.6" lengthAdjust="spacingAndGlyphs" stroke="#d4d4d4" stroke-width="0.3">2,8</text>
<text x="1158.2" y="360.2" font-size="12.4" fill="#d4d4d4" text-anchor="end" textLength="17.6" lengthAdjust="spacingAndGlyphs" stroke="#d4d4d4" stroke-width="0.3">1,8</text>
<polyline points="1164.5,508.7 1183.1,280.2 1201.7,250.2 1220.3,243.4 1238.9,240.0 1257.5,242.2 1276.1,236.6 1294.7,240.9 1313.3,238.1 1331.9,237.3 1350.5,235.3 1369.1,236.7 1387.7,236.0 1406.3,235.8 1424.9,235.2 1443.5,232.2 1462.1,233.1 1480.7,237.0 1499.3,227.2 1517.9,231.1 1536.5,212.3" fill="none" stroke="#929292" stroke-width="2.3" stroke-linejoin="round" clip-path="url(#cGAM)"/>
<path d="M1175.7 371.9 L1177.5 360.6 L1179.4 351.0 L1181.2 342.6 L1183.1 335.3 L1185.0 328.8 L1186.8 323.0 L1188.7 317.8 L1190.5 313.0 L1192.4 308.7 L1194.3 304.7 L1196.1 301.0 L1198.0 297.6 L1199.8 294.5 L1201.7 291.6 L1203.6 288.8 L1205.4 286.3 L1207.3 283.9 L1209.1 281.6 L1211.0 279.5 L1212.9 277.5 L1214.7 275.6 L1216.6 273.7 L1218.4 272.0 L1220.3 270.4 L1222.2 268.8 L1224.0 267.3 L1225.9 265.9 L1227.7 264.6 L1229.6 263.2 L1231.5 262.0 L1233.3 260.8 L1235.2 259.6 L1237.0 258.5 L1238.9 257.5 L1242.6 255.5 L1250.1 251.8 L1257.5 248.6 L1264.9 245.8 L1272.4 243.3 L1279.8 241.0 L1287.3 239.0 L1294.7 237.1 L1302.1 235.4 L1309.6 233.9 L1317.0 232.4 L1324.5 231.1 L1331.9 229.8 L1339.3 228.7 L1346.8 227.6 L1354.2 226.6 L1361.7 225.6 L1369.1 224.7 L1376.5 223.9 L1384.0 223.1 L1391.4 222.3 L1398.9 221.6 L1406.3 220.9 L1413.7 220.3 L1421.2 219.6 L1428.6 219.1 L1436.1 218.5 L1443.5 217.9 L1450.9 217.4 L1458.4 216.9 L1465.8 216.4 L1473.3 216.0 L1480.7 215.5 L1488.1 215.1 L1495.6 214.7 L1503.0 214.3 L1510.5 213.9 L1517.9 213.5 L1525.3 213.2 L1532.8 212.8 L1536.5 212.7" fill="none" stroke="#fafa14" stroke-width="2.5" stroke-linejoin="round" clip-path="url(#cGAM)"/>
<g shape-rendering="crispEdges">
<rect x="1164.50" y="56.50" width="373.00" height="299.00" fill="none" stroke="#9c9c9c" stroke-width="1"/>
<line x1="1164.50" y1="355.50" x2="1164.50" y2="361.00" stroke="#9c9c9c" stroke-width="1" />
<line x1="1238.50" y1="355.50" x2="1238.50" y2="361.00" stroke="#9c9c9c" stroke-width="1" />
<line x1="1313.50" y1="355.50" x2="1313.50" y2="361.00" stroke="#9c9c9c" stroke-width="1" />
<line x1="1387.50" y1="355.50" x2="1387.50" y2="361.00" stroke="#9c9c9c" stroke-width="1" />
<line x1="1462.50" y1="355.50" x2="1462.50" y2="361.00" stroke="#9c9c9c" stroke-width="1" />
<line x1="1536.50" y1="355.50" x2="1536.50" y2="361.00" stroke="#9c9c9c" stroke-width="1" />
</g>
<text x="1164.5" y="375.7" font-size="12.4" fill="#d4d4d4" text-anchor="middle" textLength="7.1" lengthAdjust="spacingAndGlyphs" stroke="#d4d4d4" stroke-width="0.3">0</text>
<text x="1238.9" y="375.7" font-size="12.4" fill="#d4d4d4" text-anchor="middle" textLength="14.2" lengthAdjust="spacingAndGlyphs" stroke="#d4d4d4" stroke-width="0.3">20</text>
<text x="1313.3" y="375.7" font-size="12.4" fill="#d4d4d4" text-anchor="middle" textLength="14.2" lengthAdjust="spacingAndGlyphs" stroke="#d4d4d4" stroke-width="0.3">40</text>
<text x="1387.7" y="375.7" font-size="12.4" fill="#d4d4d4" text-anchor="middle" textLength="14.2" lengthAdjust="spacingAndGlyphs" stroke="#d4d4d4" stroke-width="0.3">60</text>
<text x="1462.1" y="375.7" font-size="12.4" fill="#d4d4d4" text-anchor="middle" textLength="14.2" lengthAdjust="spacingAndGlyphs" stroke="#d4d4d4" stroke-width="0.3">80</text>
<text x="1536.5" y="375.7" font-size="12.4" fill="#d4d4d4" text-anchor="middle" textLength="21.3" lengthAdjust="spacingAndGlyphs" stroke="#d4d4d4" stroke-width="0.3">100</text>
<text y="415.1" font-size="27.2" fill="#f2f2f2" stroke="#f2f2f2" stroke-width="0.35"><tspan x="78.60" textLength="45.45" lengthAdjust="spacingAndGlyphs">Avg</tspan> <tspan x="130.30" textLength="104.30" lengthAdjust="spacingAndGlyphs">dE2000:</tspan> <tspan x="241.90" textLength="40.40" lengthAdjust="spacingAndGlyphs">0,6</tspan></text>
<text y="415.1" font-size="27.2" fill="#f2f2f2" stroke="#f2f2f2" stroke-width="0.35"><tspan x="464.60" textLength="44.50" lengthAdjust="spacingAndGlyphs">Avg</tspan> <tspan x="517.30" textLength="54.75" lengthAdjust="spacingAndGlyphs">CCT:</tspan> <tspan x="579.90" textLength="61.85" lengthAdjust="spacingAndGlyphs">6542</tspan></text>
<text y="415.1" font-size="27.2" fill="#f2f2f2" stroke="#f2f2f2" stroke-width="0.35"><tspan x="815.10" textLength="107.15" lengthAdjust="spacingAndGlyphs">Contrast</tspan> <tspan x="929.45" textLength="78.10" lengthAdjust="spacingAndGlyphs">Ratio:</tspan> <tspan x="1012.95" textLength="63.35" lengthAdjust="spacingAndGlyphs">1002</tspan></text>
<text y="415.1" font-size="27.2" fill="#f2f2f2" stroke="#f2f2f2" stroke-width="0.35"><tspan x="1191.95" textLength="100.20" lengthAdjust="spacingAndGlyphs">Average</tspan> <tspan x="1301.25" textLength="109.30" lengthAdjust="spacingAndGlyphs">Gamma:</tspan> <tspan x="1417.85" textLength="70.45" lengthAdjust="spacingAndGlyphs">2,185</tspan></text>
<rect x="0.00" y="433.00" width="1558.00" height="123.00" fill="#000000" />
<rect x="104.50" y="438.50" width="58.00" height="96.00" fill="rgb(0,0,0)" />
<rect x="104.50" y="438.50" width="58.00" height="48.20" fill="rgb(5,5,5)" />
<rect x="104.50" y="438.50" width="58.00" height="96.00" fill="none" stroke="#f8f8f8" stroke-width="1" shape-rendering="crispEdges"/>
<text x="133.7" y="547.7" font-size="10.4" fill="#f4f4f4" text-anchor="middle" textLength="6.3" lengthAdjust="spacingAndGlyphs" font-weight="bold">0</text>
<rect x="173.50" y="438.50" width="58.00" height="96.00" fill="rgb(13,13,13)" />
<rect x="173.50" y="438.50" width="58.00" height="48.20" fill="rgb(8,8,8)" />
<rect x="173.50" y="438.50" width="58.00" height="96.00" fill="none" stroke="#f8f8f8" stroke-width="1" shape-rendering="crispEdges"/>
<text x="202.7" y="547.7" font-size="10.4" fill="#f4f4f4" text-anchor="middle" textLength="6.3" lengthAdjust="spacingAndGlyphs" font-weight="bold">5</text>
<rect x="242.50" y="438.50" width="58.00" height="96.00" fill="rgb(26,26,26)" />
<rect x="242.50" y="438.50" width="58.00" height="48.20" fill="rgb(26,26,26)" />
<rect x="242.50" y="438.50" width="58.00" height="96.00" fill="none" stroke="#f8f8f8" stroke-width="1" shape-rendering="crispEdges"/>
<text x="271.7" y="547.7" font-size="10.4" fill="#f4f4f4" text-anchor="middle" textLength="12.6" lengthAdjust="spacingAndGlyphs" font-weight="bold">10</text>
<rect x="311.50" y="438.50" width="58.00" height="96.00" fill="rgb(38,38,38)" />
<rect x="311.50" y="438.50" width="58.00" height="48.20" fill="rgb(38,38,38)" />
<rect x="311.50" y="438.50" width="58.00" height="96.00" fill="none" stroke="#f8f8f8" stroke-width="1" shape-rendering="crispEdges"/>
<text x="340.7" y="547.7" font-size="10.4" fill="#f4f4f4" text-anchor="middle" textLength="12.6" lengthAdjust="spacingAndGlyphs" font-weight="bold">15</text>
<rect x="380.50" y="438.50" width="58.00" height="96.00" fill="rgb(51,51,51)" />
<rect x="380.50" y="438.50" width="58.00" height="48.20" fill="rgb(51,51,51)" />
<rect x="380.50" y="438.50" width="58.00" height="96.00" fill="none" stroke="#f8f8f8" stroke-width="1" shape-rendering="crispEdges"/>
<text x="409.7" y="547.7" font-size="10.4" fill="#f4f4f4" text-anchor="middle" textLength="12.6" lengthAdjust="spacingAndGlyphs" font-weight="bold">20</text>
<rect x="449.50" y="438.50" width="58.00" height="96.00" fill="rgb(64,64,64)" />
<rect x="449.50" y="438.50" width="58.00" height="48.20" fill="rgb(64,64,64)" />
<rect x="449.50" y="438.50" width="58.00" height="96.00" fill="none" stroke="#f8f8f8" stroke-width="1" shape-rendering="crispEdges"/>
<text x="478.7" y="547.7" font-size="10.4" fill="#f4f4f4" text-anchor="middle" textLength="12.6" lengthAdjust="spacingAndGlyphs" font-weight="bold">25</text>
<rect x="518.50" y="438.50" width="58.00" height="96.00" fill="rgb(76,76,76)" />
<rect x="518.50" y="438.50" width="58.00" height="48.20" fill="rgb(76,76,76)" />
<rect x="518.50" y="438.50" width="58.00" height="96.00" fill="none" stroke="#f8f8f8" stroke-width="1" shape-rendering="crispEdges"/>
<text x="547.7" y="547.7" font-size="10.4" fill="#f4f4f4" text-anchor="middle" textLength="12.6" lengthAdjust="spacingAndGlyphs" font-weight="bold">30</text>
<rect x="587.50" y="438.50" width="58.00" height="96.00" fill="rgb(89,89,89)" />
<rect x="587.50" y="438.50" width="58.00" height="48.20" fill="rgb(89,89,89)" />
<rect x="587.50" y="438.50" width="58.00" height="96.00" fill="none" stroke="#f8f8f8" stroke-width="1" shape-rendering="crispEdges"/>
<text x="616.7" y="547.7" font-size="10.4" fill="#f4f4f4" text-anchor="middle" textLength="12.6" lengthAdjust="spacingAndGlyphs" font-weight="bold">35</text>
<rect x="656.50" y="438.50" width="58.00" height="96.00" fill="rgb(102,102,102)" />
<rect x="656.50" y="438.50" width="58.00" height="48.20" fill="rgb(102,102,102)" />
<rect x="656.50" y="438.50" width="58.00" height="96.00" fill="none" stroke="#f8f8f8" stroke-width="1" shape-rendering="crispEdges"/>
<text x="685.7" y="547.7" font-size="10.4" fill="#f4f4f4" text-anchor="middle" textLength="12.6" lengthAdjust="spacingAndGlyphs" font-weight="bold">40</text>
<rect x="725.50" y="438.50" width="58.00" height="96.00" fill="rgb(115,115,115)" />
<rect x="725.50" y="438.50" width="58.00" height="48.20" fill="rgb(115,115,115)" />
<rect x="725.50" y="438.50" width="58.00" height="96.00" fill="none" stroke="#f8f8f8" stroke-width="1" shape-rendering="crispEdges"/>
<text x="754.7" y="547.7" font-size="10.4" fill="#f4f4f4" text-anchor="middle" textLength="12.6" lengthAdjust="spacingAndGlyphs" font-weight="bold">45</text>
<rect x="794.50" y="438.50" width="58.00" height="96.00" fill="rgb(128,128,128)" />
<rect x="794.50" y="438.50" width="58.00" height="48.20" fill="rgb(128,128,128)" />
<rect x="794.50" y="438.50" width="58.00" height="96.00" fill="none" stroke="#f8f8f8" stroke-width="1" shape-rendering="crispEdges"/>
<text x="823.7" y="547.7" font-size="10.4" fill="#f4f4f4" text-anchor="middle" textLength="12.6" lengthAdjust="spacingAndGlyphs" font-weight="bold">50</text>
<rect x="863.50" y="438.50" width="58.00" height="96.00" fill="rgb(140,140,140)" />
<rect x="863.50" y="438.50" width="58.00" height="48.20" fill="rgb(140,140,140)" />
<rect x="863.50" y="438.50" width="58.00" height="96.00" fill="none" stroke="#f8f8f8" stroke-width="1" shape-rendering="crispEdges"/>
<text x="892.7" y="547.7" font-size="10.4" fill="#f4f4f4" text-anchor="middle" textLength="12.6" lengthAdjust="spacingAndGlyphs" font-weight="bold">55</text>
<rect x="932.50" y="438.50" width="58.00" height="96.00" fill="rgb(153,153,153)" />
<rect x="932.50" y="438.50" width="58.00" height="48.20" fill="rgb(153,153,153)" />
<rect x="932.50" y="438.50" width="58.00" height="96.00" fill="none" stroke="#f8f8f8" stroke-width="1" shape-rendering="crispEdges"/>
<text x="961.7" y="547.7" font-size="10.4" fill="#f4f4f4" text-anchor="middle" textLength="12.6" lengthAdjust="spacingAndGlyphs" font-weight="bold">60</text>
<rect x="1001.50" y="438.50" width="58.00" height="96.00" fill="rgb(166,166,166)" />
<rect x="1001.50" y="438.50" width="58.00" height="48.20" fill="rgb(166,166,166)" />
<rect x="1001.50" y="438.50" width="58.00" height="96.00" fill="none" stroke="#f8f8f8" stroke-width="1" shape-rendering="crispEdges"/>
<text x="1030.7" y="547.7" font-size="10.4" fill="#f4f4f4" text-anchor="middle" textLength="12.6" lengthAdjust="spacingAndGlyphs" font-weight="bold">65</text>
<rect x="1070.50" y="438.50" width="58.00" height="96.00" fill="rgb(178,178,178)" />
<rect x="1070.50" y="438.50" width="58.00" height="48.20" fill="rgb(178,178,178)" />
<rect x="1070.50" y="438.50" width="58.00" height="96.00" fill="none" stroke="#f8f8f8" stroke-width="1" shape-rendering="crispEdges"/>
<text x="1099.7" y="547.7" font-size="10.4" fill="#f4f4f4" text-anchor="middle" textLength="12.6" lengthAdjust="spacingAndGlyphs" font-weight="bold">70</text>
<rect x="1139.50" y="438.50" width="58.00" height="96.00" fill="rgb(191,191,191)" />
<rect x="1139.50" y="438.50" width="58.00" height="48.20" fill="rgb(191,191,191)" />
<rect x="1139.50" y="438.50" width="58.00" height="96.00" fill="none" stroke="#f8f8f8" stroke-width="1" shape-rendering="crispEdges"/>
<text x="1168.7" y="547.7" font-size="10.4" fill="#f4f4f4" text-anchor="middle" textLength="12.6" lengthAdjust="spacingAndGlyphs" font-weight="bold">75</text>
<rect x="1208.50" y="438.50" width="58.00" height="96.00" fill="rgb(204,204,204)" />
<rect x="1208.50" y="438.50" width="58.00" height="48.20" fill="rgb(204,204,204)" />
<rect x="1208.50" y="438.50" width="58.00" height="96.00" fill="none" stroke="#f8f8f8" stroke-width="1" shape-rendering="crispEdges"/>
<text x="1237.7" y="547.7" font-size="10.4" fill="#f4f4f4" text-anchor="middle" textLength="12.6" lengthAdjust="spacingAndGlyphs" font-weight="bold">80</text>
<rect x="1277.50" y="438.50" width="58.00" height="96.00" fill="rgb(217,217,217)" />
<rect x="1277.50" y="438.50" width="58.00" height="48.20" fill="rgb(217,217,217)" />
<rect x="1277.50" y="438.50" width="58.00" height="96.00" fill="none" stroke="#f8f8f8" stroke-width="1" shape-rendering="crispEdges"/>
<text x="1306.7" y="547.7" font-size="10.4" fill="#f4f4f4" text-anchor="middle" textLength="12.6" lengthAdjust="spacingAndGlyphs" font-weight="bold">85</text>
<rect x="1346.50" y="438.50" width="58.00" height="96.00" fill="rgb(230,230,230)" />
<rect x="1346.50" y="438.50" width="58.00" height="48.20" fill="rgb(230,230,230)" />
<rect x="1346.50" y="438.50" width="58.00" height="96.00" fill="none" stroke="#f8f8f8" stroke-width="1" shape-rendering="crispEdges"/>
<text x="1375.7" y="547.7" font-size="10.4" fill="#f4f4f4" text-anchor="middle" textLength="12.6" lengthAdjust="spacingAndGlyphs" font-weight="bold">90</text>
<rect x="1415.50" y="438.50" width="58.00" height="96.00" fill="rgb(242,242,242)" />
<rect x="1415.50" y="438.50" width="58.00" height="48.20" fill="rgb(242,242,242)" />
<rect x="1415.50" y="438.50" width="58.00" height="96.00" fill="none" stroke="#f8f8f8" stroke-width="1" shape-rendering="crispEdges"/>
<text x="1444.7" y="547.7" font-size="10.4" fill="#f4f4f4" text-anchor="middle" textLength="12.6" lengthAdjust="spacingAndGlyphs" font-weight="bold">95</text>
<rect x="1484.50" y="438.50" width="58.00" height="96.00" fill="rgb(255,255,255)" />
<rect x="1484.50" y="438.50" width="58.00" height="48.20" fill="rgb(255,255,255)" />
<rect x="1484.50" y="438.50" width="58.00" height="96.00" fill="none" stroke="#f8f8f8" stroke-width="1" shape-rendering="crispEdges"/>
<text x="1513.7" y="547.7" font-size="10.4" fill="#f4f4f4" text-anchor="middle" textLength="18.9" lengthAdjust="spacingAndGlyphs" font-weight="bold">100</text>
<text transform="translate(99.5,475.5) rotate(-90)" font-size="10.5" font-weight="bold" fill="#f0f0f0" textLength="32" lengthAdjust="spacingAndGlyphs">Actual</text>
<text transform="translate(99.5,529.5) rotate(-90)" font-size="10.5" font-weight="bold" fill="#f0f0f0" textLength="33" lengthAdjust="spacingAndGlyphs">Target</text>
<text y="618.4" font-size="25.6" fill="#f0f0f0" stroke="#f0f0f0" stroke-width="0.35"><tspan x="17.10" textLength="93.75" lengthAdjust="spacingAndGlyphs">Current</tspan> <tspan x="122.95" textLength="100.75" lengthAdjust="spacingAndGlyphs">Reading</tspan></text>
<text y="658.6" font-size="20.6" fill="#f0f0f0" stroke="#f0f0f0" stroke-width="0.35"><tspan x="18.00" textLength="18.00" lengthAdjust="spacingAndGlyphs">x:</tspan> <tspan x="42.00" textLength="58.70" lengthAdjust="spacingAndGlyphs">0,313</tspan></text>
<text y="658.6" font-size="20.6" fill="#f0f0f0" stroke="#f0f0f0" stroke-width="0.35"><tspan x="158.95" textLength="16.35" lengthAdjust="spacingAndGlyphs">y:</tspan> <tspan x="182.65" textLength="72.30" lengthAdjust="spacingAndGlyphs">0,3296</tspan></text>
<text y="690.4" font-size="20.6" fill="#f0f0f0" stroke="#f0f0f0" stroke-width="0.35"><tspan x="17.10" textLength="25.95" lengthAdjust="spacingAndGlyphs">u':</tspan> <tspan x="50.45" textLength="70.55" lengthAdjust="spacingAndGlyphs">0,1978</tspan></text>
<text y="690.4" font-size="20.6" fill="#f0f0f0" stroke="#f0f0f0" stroke-width="0.35"><tspan x="158.95" textLength="23.05" lengthAdjust="spacingAndGlyphs">v':</tspan> <tspan x="189.40" textLength="70.55" lengthAdjust="spacingAndGlyphs">0,4687</tspan></text>
<text y="721.8" font-size="20.6" fill="#f0f0f0" stroke="#f0f0f0" stroke-width="0.35"><tspan x="17.10" textLength="72.10" lengthAdjust="spacingAndGlyphs">cd/m²:</tspan> <tspan x="94.65" textLength="84.75" lengthAdjust="spacingAndGlyphs">361,114</tspan></text>
<text y="753.3" font-size="20.6" fill="#f0f0f0" stroke="#f0f0f0" stroke-width="0.35"><tspan x="18.00" textLength="26.75" lengthAdjust="spacingAndGlyphs">ΔE</tspan> <tspan x="51.10" textLength="59.70" lengthAdjust="spacingAndGlyphs">2000:</tspan> <tspan x="116.25" textLength="45.90" lengthAdjust="spacingAndGlyphs">0,39</tspan></text>
<text x="441.5" y="586.8" font-size="12" fill="#d6d6d6" text-anchor="middle" textLength="70.5" lengthAdjust="spacingAndGlyphs" stroke="#d6d6d6" stroke-width="0.3">CIE 1931 xy</text>
<g shape-rendering="crispEdges">
<linearGradient id="ci0"><stop offset="0.0000" stop-color="#87ffcf"/><stop offset="0.0625" stop-color="#90ffcf"/><stop offset="0.1250" stop-color="#98ffcf"/><stop offset="0.1875" stop-color="#a1ffce"/><stop offset="0.2500" stop-color="#aaffce"/><stop offset="0.3125" stop-color="#b4ffcd"/><stop offset="0.3750" stop-color="#bdffcd"/><stop offset="0.4375" stop-color="#c6ffcd"/><stop offset="0.5000" stop-color="#d0ffcc"/><stop offset="0.5625" stop-color="#daffcc"/><stop offset="0.6250" stop-color="#e4ffcb"/><stop offset="0.6875" stop-color="#eeffcb"/><stop offset="0.7500" stop-color="#f8ffcb"/><stop offset="0.8125" stop-color="#fffbc7"/><stop offset="0.8750" stop-color="#fff1bf"/><stop offset="0.9375" stop-color="#ffe8b7"/><stop offset="1.0000" stop-color="#ffdfb0"/></linearGradient>
<rect x="339.50" y="591.50" width="236.00" height="4.60" fill="url(#ci0)" />
<linearGradient id="ci1"><stop offset="0.0000" stop-color="#89ffd2"/><stop offset="0.0625" stop-color="#91ffd1"/><stop offset="0.1250" stop-color="#9affd1"/><stop offset="0.1875" stop-color="#a3ffd1"/><stop offset="0.2500" stop-color="#acffd0"/><stop offset="0.3125" stop-color="#b6ffd0"/><stop offset="0.3750" stop-color="#bfffcf"/><stop offset="0.4375" stop-color="#c9ffcf"/><stop offset="0.5000" stop-color="#d2ffcf"/><stop offset="0.5625" stop-color="#dcffce"/><stop offset="0.6250" stop-color="#e6ffce"/><stop offset="0.6875" stop-color="#f0ffcd"/><stop offset="0.7500" stop-color="#fbffcd"/><stop offset="0.8125" stop-color="#fff9c7"/><stop offset="0.8750" stop-color="#ffefbf"/><stop offset="0.9375" stop-color="#ffe6b7"/><stop offset="1.0000" stop-color="#ffddb0"/></linearGradient>
<rect x="339.50" y="595.50" width="236.00" height="4.60" fill="url(#ci1)" />
<linearGradient id="ci2"><stop offset="0.0000" stop-color="#8affd4"/><stop offset="0.0625" stop-color="#93ffd4"/><stop offset="0.1250" stop-color="#9cffd3"/><stop offset="0.1875" stop-color="#a5ffd3"/><stop offset="0.2500" stop-color="#aeffd3"/><stop offset="0.3125" stop-color="#b8ffd2"/><stop offset="0.3750" stop-color="#c1ffd2"/><stop offset="0.4375" stop-color="#cbffd1"/><stop offset="0.5000" stop-color="#d5ffd1"/><stop offset="0.5625" stop-color="#dfffd1"/><stop offset="0.6250" stop-color="#e9ffd0"/><stop offset="0.6875" stop-color="#f3ffd0"/><stop offset="0.7500" stop-color="#feffd0"/><stop offset="0.8125" stop-color="#fff6c8"/><stop offset="0.8750" stop-color="#ffecc0"/><stop offset="0.9375" stop-color="#ffe3b8"/><stop offset="1.0000" stop-color="#ffdbb0"/></linearGradient>
<rect x="339.50" y="599.50" width="236.00" height="4.60" fill="url(#ci2)" />
<linearGradient id="ci3"><stop offset="0.0000" stop-color="#8cffd6"/><stop offset="0.0625" stop-color="#95ffd6"/><stop offset="0.1250" stop-color="#9effd6"/><stop offset="0.1875" stop-color="#a7ffd5"/><stop offset="0.2500" stop-color="#b0ffd5"/><stop offset="0.3125" stop-color="#baffd5"/><stop offset="0.3750" stop-color="#c3ffd4"/><stop offset="0.4375" stop-color="#cdffd4"/><stop offset="0.5000" stop-color="#d7ffd4"/><stop offset="0.5625" stop-color="#e1ffd3"/><stop offset="0.6250" stop-color="#ebffd3"/><stop offset="0.6875" stop-color="#f6ffd2"/><stop offset="0.7500" stop-color="#fffed1"/><stop offset="0.8125" stop-color="#fff4c8"/><stop offset="0.8750" stop-color="#ffeac0"/><stop offset="0.9375" stop-color="#ffe1b8"/><stop offset="1.0000" stop-color="#ffd8b1"/></linearGradient>
<rect x="339.50" y="603.50" width="236.00" height="4.60" fill="url(#ci3)" />
<linearGradient id="ci4"><stop offset="0.0000" stop-color="#8effd9"/><stop offset="0.0625" stop-color="#97ffd8"/><stop offset="0.1250" stop-color="#a0ffd8"/><stop offset="0.1875" stop-color="#a9ffd8"/><stop offset="0.2500" stop-color="#b2ffd7"/><stop offset="0.3125" stop-color="#bcffd7"/><stop offset="0.3750" stop-color="#c5ffd7"/><stop offset="0.4375" stop-color="#cfffd6"/><stop offset="0.5000" stop-color="#d9ffd6"/><stop offset="0.5625" stop-color="#e3ffd6"/><stop offset="0.6250" stop-color="#eeffd5"/><stop offset="0.6875" stop-color="#f8ffd5"/><stop offset="0.7500" stop-color="#fffbd1"/><stop offset="0.8125" stop-color="#fff1c9"/><stop offset="0.8750" stop-color="#ffe7c0"/><stop offset="0.9375" stop-color="#ffdfb9"/><stop offset="1.0000" stop-color="#ffd6b1"/></linearGradient>
<rect x="339.50" y="607.50" width="236.00" height="4.60" fill="url(#ci4)" />
<linearGradient id="ci5"><stop offset="0.0000" stop-color="#90ffdb"/><stop offset="0.0625" stop-color="#99ffdb"/><stop offset="0.1250" stop-color="#a2ffda"/><stop offset="0.1875" stop-color="#abffda"/><stop offset="0.2500" stop-color="#b4ffda"/><stop offset="0.3125" stop-color="#beffda"/><stop offset="0.3750" stop-color="#c8ffd9"/><stop offset="0.4375" stop-color="#d2ffd9"/><stop offset="0.5000" stop-color="#dcffd9"/><stop offset="0.5625" stop-color="#e6ffd8"/><stop offset="0.6250" stop-color="#f0ffd8"/><stop offset="0.6875" stop-color="#fbffd8"/><stop offset="0.7500" stop-color="#fff9d2"/><stop offset="0.8125" stop-color="#ffefc9"/><stop offset="0.8750" stop-color="#ffe5c1"/><stop offset="0.9375" stop-color="#ffdcb9"/><stop offset="1.0000" stop-color="#ffd4b2"/></linearGradient>
<rect x="339.50" y="611.50" width="236.00" height="4.60" fill="url(#ci5)" />
<linearGradient id="ci6"><stop offset="0.0000" stop-color="#91ffdd"/><stop offset="0.0625" stop-color="#9affdd"/><stop offset="0.1250" stop-color="#a4ffdd"/><stop offset="0.1875" stop-color="#adffdd"/><stop offset="0.2500" stop-color="#b6ffdc"/><stop offset="0.3125" stop-color="#c0ffdc"/><stop offset="0.3750" stop-color="#caffdc"/><stop offset="0.4375" stop-color="#d4ffdc"/><stop offset="0.5000" stop-color="#deffdb"/><stop offset="0.5625" stop-color="#e8ffdb"/><stop offset="0.6250" stop-color="#f3ffdb"/><stop offset="0.6875" stop-color="#feffda"/><stop offset="0.7500" stop-color="#fff6d2"/><stop offset="0.8125" stop-color="#ffecc9"/><stop offset="0.8750" stop-color="#ffe3c1"/><stop offset="0.9375" stop-color="#ffdaba"/><stop offset="1.0000" stop-color="#ffd2b2"/></linearGradient>
<rect x="339.50" y="615.50" width="236.00" height="4.60" fill="url(#ci6)" />
<linearGradient id="ci7"><stop offset="0.0000" stop-color="#93ffe0"/><stop offset="0.0625" stop-color="#9cffe0"/><stop offset="0.1250" stop-color="#a6ffdf"/><stop offset="0.1875" stop-color="#afffdf"/><stop offset="0.2500" stop-color="#b9ffdf"/><stop offset="0.3125" stop-color="#c2ffdf"/><stop offset="0.3750" stop-color="#ccffde"/><stop offset="0.4375" stop-color="#d6ffde"/><stop offset="0.5000" stop-color="#e0ffde"/><stop offset="0.5625" stop-color="#ebffde"/><stop offset="0.6250" stop-color="#f5ffdd"/><stop offset="0.6875" stop-color="#fffedc"/><stop offset="0.7500" stop-color="#fff3d3"/><stop offset="0.8125" stop-color="#ffeaca"/><stop offset="0.8750" stop-color="#ffe0c2"/><stop offset="0.9375" stop-color="#ffd8ba"/><stop offset="1.0000" stop-color="#ffd0b3"/></linearGradient>
<rect x="339.50" y="619.50" width="236.00" height="4.60" fill="url(#ci7)" />
<linearGradient id="ci8"><stop offset="0.0000" stop-color="#95ffe2"/><stop offset="0.0625" stop-color="#9effe2"/><stop offset="0.1250" stop-color="#a8ffe2"/><stop offset="0.1875" stop-color="#b1ffe2"/><stop offset="0.2500" stop-color="#bbffe1"/><stop offset="0.3125" stop-color="#c4ffe1"/><stop offset="0.3750" stop-color="#ceffe1"/><stop offset="0.4375" stop-color="#d9ffe1"/><stop offset="0.5000" stop-color="#e3ffe1"/><stop offset="0.5625" stop-color="#edffe0"/><stop offset="0.6250" stop-color="#f8ffe0"/><stop offset="0.6875" stop-color="#fffbdc"/><stop offset="0.7500" stop-color="#fff1d3"/><stop offset="0.8125" stop-color="#ffe7ca"/><stop offset="0.8750" stop-color="#ffdec2"/><stop offset="0.9375" stop-color="#ffd5ba"/><stop offset="1.0000" stop-color="#ffcdb3"/></linearGradient>
<rect x="339.50" y="623.50" width="236.00" height="4.60" fill="url(#ci8)" />
<linearGradient id="ci9"><stop offset="0.0000" stop-color="#97ffe5"/><stop offset="0.0625" stop-color="#a0ffe5"/><stop offset="0.1250" stop-color="#aaffe4"/><stop offset="0.1875" stop-color="#b3ffe4"/><stop offset="0.2500" stop-color="#bdffe4"/><stop offset="0.3125" stop-color="#c7ffe4"/><stop offset="0.3750" stop-color="#d1ffe4"/><stop offset="0.4375" stop-color="#dbffe3"/><stop offset="0.5000" stop-color="#e5ffe3"/><stop offset="0.5625" stop-color="#f0ffe3"/><stop offset="0.6250" stop-color="#fbffe3"/><stop offset="0.6875" stop-color="#fff8dd"/><stop offset="0.7500" stop-color="#ffeed3"/><stop offset="0.8125" stop-color="#ffe5cb"/><stop offset="0.8750" stop-color="#ffdcc2"/><stop offset="0.9375" stop-color="#ffd3bb"/><stop offset="1.0000" stop-color="#ffcbb4"/></linearGradient>
<rect x="339.50" y="627.50" width="236.00" height="4.60" fill="url(#ci9)" />
<linearGradient id="ci10"><stop offset="0.0000" stop-color="#99ffe7"/><stop offset="0.0625" stop-color="#a2ffe7"/><stop offset="0.1250" stop-color="#acffe7"/><stop offset="0.1875" stop-color="#b5ffe7"/><stop offset="0.2500" stop-color="#bfffe7"/><stop offset="0.3125" stop-color="#c9ffe7"/><stop offset="0.3750" stop-color="#d3ffe6"/><stop offset="0.4375" stop-color="#ddffe6"/><stop offset="0.5000" stop-color="#e8ffe6"/><stop offset="0.5625" stop-color="#f3ffe6"/><stop offset="0.6250" stop-color="#feffe6"/><stop offset="0.6875" stop-color="#fff6dd"/><stop offset="0.7500" stop-color="#ffecd4"/><stop offset="0.8125" stop-color="#ffe2cb"/><stop offset="0.8750" stop-color="#ffd9c3"/><stop offset="0.9375" stop-color="#ffd1bb"/><stop offset="1.0000" stop-color="#ffc9b4"/></linearGradient>
<rect x="339.50" y="631.50" width="236.00" height="4.60" fill="url(#ci10)" />
<linearGradient id="ci11"><stop offset="0.0000" stop-color="#9bffea"/><stop offset="0.0625" stop-color="#a4ffea"/><stop offset="0.1250" stop-color="#aeffea"/><stop offset="0.1875" stop-color="#b7ffea"/><stop offset="0.2500" stop-color="#c1ffe9"/><stop offset="0.3125" stop-color="#cbffe9"/><stop offset="0.3750" stop-color="#d5ffe9"/><stop offset="0.4375" stop-color="#e0ffe9"/><stop offset="0.5000" stop-color="#eaffe9"/><stop offset="0.5625" stop-color="#f5ffe9"/><stop offset="0.6250" stop-color="#fffee7"/><stop offset="0.6875" stop-color="#fff3dd"/><stop offset="0.7500" stop-color="#ffe9d4"/><stop offset="0.8125" stop-color="#ffe0cb"/><stop offset="0.8750" stop-color="#ffd7c3"/><stop offset="0.9375" stop-color="#ffcfbc"/><stop offset="1.0000" stop-color="#ffc7b4"/></linearGradient>
<rect x="339.50" y="635.50" width="236.00" height="4.60" fill="url(#ci11)" />
<linearGradient id="ci12"><stop offset="0.0000" stop-color="#9dffed"/><stop offset="0.0625" stop-color="#a6ffed"/><stop offset="0.1250" stop-color="#b0ffec"/><stop offset="0.1875" stop-color="#b9ffec"/><stop offset="0.2500" stop-color="#c3ffec"/><stop offset="0.3125" stop-color="#ceffec"/><stop offset="0.3750" stop-color="#d8ffec"/><stop offset="0.4375" stop-color="#e2ffec"/><stop offset="0.5000" stop-color="#edffeb"/><stop offset="0.5625" stop-color="#f8ffeb"/><stop offset="0.6250" stop-color="#fffbe7"/><stop offset="0.6875" stop-color="#fff0de"/><stop offset="0.7500" stop-color="#ffe7d4"/><stop offset="0.8125" stop-color="#ffddcc"/><stop offset="0.8750" stop-color="#ffd5c4"/><stop offset="0.9375" stop-color="#ffcdbc"/><stop offset="1.0000" stop-color="#ffc5b5"/></linearGradient>
<rect x="339.50" y="639.50" width="236.00" height="4.60" fill="url(#ci12)" />
<linearGradient id="ci13"><stop offset="0.0000" stop-color="#9fffef"/><stop offset="0.0625" stop-color="#a8ffef"/><stop offset="0.1250" stop-color="#b2ffef"/><stop offset="0.1875" stop-color="#bcffef"/><stop offset="0.2500" stop-color="#c6ffef"/><stop offset="0.3125" stop-color="#d0ffef"/><stop offset="0.3750" stop-color="#daffef"/><stop offset="0.4375" stop-color="#e5ffee"/><stop offset="0.5000" stop-color="#f0ffee"/><stop offset="0.5625" stop-color="#fbffee"/><stop offset="0.6250" stop-color="#fff8e8"/><stop offset="0.6875" stop-color="#ffeede"/><stop offset="0.7500" stop-color="#ffe4d5"/><stop offset="0.8125" stop-color="#ffdbcc"/><stop offset="0.8750" stop-color="#ffd2c4"/><stop offset="0.9375" stop-color="#ffcabc"/><stop offset="1.0000" stop-color="#ffc3b5"/></linearGradient>
<rect x="339.50" y="643.50" width="236.00" height="4.60" fill="url(#ci13)" />
<linearGradient id="ci14"><stop offset="0.0000" stop-color="#a0fff2"/><stop offset="0.0625" stop-color="#aafff2"/><stop offset="0.1250" stop-color="#b4fff2"/><stop offset="0.1875" stop-color="#befff2"/><stop offset="0.2500" stop-color="#c8fff2"/><stop offset="0.3125" stop-color="#d2fff2"/><stop offset="0.3750" stop-color="#ddfff1"/><stop offset="0.4375" stop-color="#e7fff1"/><stop offset="0.5000" stop-color="#f2fff1"/><stop offset="0.5625" stop-color="#fdfff1"/><stop offset="0.6250" stop-color="#fff6e8"/><stop offset="0.6875" stop-color="#ffebde"/><stop offset="0.7500" stop-color="#ffe2d5"/><stop offset="0.8125" stop-color="#ffd9cd"/><stop offset="0.8750" stop-color="#ffd0c4"/><stop offset="0.9375" stop-color="#ffc8bd"/><stop offset="1.0000" stop-color="#ffc1b6"/></linearGradient>
<rect x="339.50" y="647.50" width="236.00" height="4.60" fill="url(#ci14)" />
<linearGradient id="ci15"><stop offset="0.0000" stop-color="#a2fff5"/><stop offset="0.0625" stop-color="#acfff5"/><stop offset="0.1250" stop-color="#b6fff5"/><stop offset="0.1875" stop-color="#c0fff5"/><stop offset="0.2500" stop-color="#cafff4"/><stop offset="0.3125" stop-color="#d5fff4"/><stop offset="0.3750" stop-color="#dffff4"/><stop offset="0.4375" stop-color="#eafff4"/><stop offset="0.5000" stop-color="#f5fff4"/><stop offset="0.5625" stop-color="#fffef3"/><stop offset="0.6250" stop-color="#fff3e8"/><stop offset="0.6875" stop-color="#ffe9df"/><stop offset="0.7500" stop-color="#ffdfd5"/><stop offset="0.8125" stop-color="#ffd6cd"/><stop offset="0.8750" stop-color="#ffcec5"/><stop offset="0.9375" stop-color="#ffc6bd"/><stop offset="1.0000" stop-color="#ffbfb6"/></linearGradient>
<rect x="339.50" y="651.50" width="236.00" height="4.60" fill="url(#ci15)" />
<linearGradient id="ci16"><stop offset="0.0000" stop-color="#a4fff7"/><stop offset="0.0625" stop-color="#aefff7"/><stop offset="0.1250" stop-color="#b8fff7"/><stop offset="0.1875" stop-color="#c2fff7"/><stop offset="0.2500" stop-color="#cdfff7"/><stop offset="0.3125" stop-color="#d7fff7"/><stop offset="0.3750" stop-color="#e2fff7"/><stop offset="0.4375" stop-color="#edfff7"/><stop offset="0.5000" stop-color="#f8fff7"/><stop offset="0.5625" stop-color="#fffbf3"/><stop offset="0.6250" stop-color="#fff0e9"/><stop offset="0.6875" stop-color="#ffe6df"/><stop offset="0.7500" stop-color="#ffddd6"/><stop offset="0.8125" stop-color="#ffd4cd"/><stop offset="0.8750" stop-color="#ffccc5"/><stop offset="0.9375" stop-color="#ffc4be"/><stop offset="1.0000" stop-color="#ffbdb6"/></linearGradient>
<rect x="339.50" y="655.50" width="236.00" height="4.60" fill="url(#ci16)" />
<linearGradient id="ci17"><stop offset="0.0000" stop-color="#a7fffa"/><stop offset="0.0625" stop-color="#b0fffa"/><stop offset="0.1250" stop-color="#bafffa"/><stop offset="0.1875" stop-color="#c5fffa"/><stop offset="0.2500" stop-color="#cffffa"/><stop offset="0.3125" stop-color="#dafffa"/><stop offset="0.3750" stop-color="#e4fffa"/><stop offset="0.4375" stop-color="#effffa"/><stop offset="0.5000" stop-color="#fbfffa"/><stop offset="0.5625" stop-color="#fff8f3"/><stop offset="0.6250" stop-color="#ffeee9"/><stop offset="0.6875" stop-color="#ffe4df"/><stop offset="0.7500" stop-color="#ffdad6"/><stop offset="0.8125" stop-color="#ffd2ce"/><stop offset="0.8750" stop-color="#ffcac6"/><stop offset="0.9375" stop-color="#ffc2be"/><stop offset="1.0000" stop-color="#ffbbb7"/></linearGradient>
<rect x="339.50" y="659.50" width="236.00" height="4.60" fill="url(#ci17)" />
<linearGradient id="ci18"><stop offset="0.0000" stop-color="#a9fffd"/><stop offset="0.0625" stop-color="#b3fffd"/><stop offset="0.1250" stop-color="#bdfffd"/><stop offset="0.1875" stop-color="#c7fffd"/><stop offset="0.2500" stop-color="#d1fffd"/><stop offset="0.3125" stop-color="#dcfffd"/><stop offset="0.3750" stop-color="#e7fffd"/><stop offset="0.4375" stop-color="#f2fffd"/><stop offset="0.5000" stop-color="#fdfffd"/><stop offset="0.5625" stop-color="#fff5f4"/><stop offset="0.6250" stop-color="#ffebe9"/><stop offset="0.6875" stop-color="#ffe1e0"/><stop offset="0.7500" stop-color="#ffd8d7"/><stop offset="0.8125" stop-color="#ffcfce"/><stop offset="0.8750" stop-color="#ffc7c6"/><stop offset="0.9375" stop-color="#ffc0be"/><stop offset="1.0000" stop-color="#ffb9b7"/></linearGradient>
<rect x="339.50" y="663.50" width="236.00" height="4.60" fill="url(#ci18)" />
<linearGradient id="ci19"><stop offset="0.0000" stop-color="#aafeff"/><stop offset="0.0625" stop-color="#b4feff"/><stop offset="0.1250" stop-color="#befeff"/><stop offset="0.1875" stop-color="#c9feff"/><stop offset="0.2500" stop-color="#d3feff"/><stop offset="0.3125" stop-color="#defeff"/><stop offset="0.3750" stop-color="#e9feff"/><stop offset="0.4375" stop-color="#f4feff"/><stop offset="0.5000" stop-color="#fffeff"/><stop offset="0.5625" stop-color="#fff3f4"/><stop offset="0.6250" stop-color="#ffe8ea"/><stop offset="0.6875" stop-color="#ffdfe0"/><stop offset="0.7500" stop-color="#ffd6d7"/><stop offset="0.8125" stop-color="#ffcdce"/><stop offset="0.8750" stop-color="#ffc5c6"/><stop offset="0.9375" stop-color="#ffbebf"/><stop offset="1.0000" stop-color="#ffb7b8"/></linearGradient>
<rect x="339.50" y="667.50" width="236.00" height="4.60" fill="url(#ci19)" />
<linearGradient id="ci20"><stop offset="0.0000" stop-color="#aafbff"/><stop offset="0.0625" stop-color="#b4fbff"/><stop offset="0.1250" stop-color="#befbff"/><stop offset="0.1875" stop-color="#c9fbff"/><stop offset="0.2500" stop-color="#d3fbff"/><stop offset="0.3125" stop-color="#defbff"/><stop offset="0.3750" stop-color="#e9fbff"/><stop offset="0.4375" stop-color="#f4fbff"/><stop offset="0.5000" stop-color="#fffbff"/><stop offset="0.5625" stop-color="#fff0f4"/><stop offset="0.6250" stop-color="#ffe6ea"/><stop offset="0.6875" stop-color="#ffdce0"/><stop offset="0.7500" stop-color="#ffd3d7"/><stop offset="0.8125" stop-color="#ffcbcf"/><stop offset="0.8750" stop-color="#ffc3c7"/><stop offset="0.9375" stop-color="#ffbcbf"/><stop offset="1.0000" stop-color="#ffb5b8"/></linearGradient>
<rect x="339.50" y="671.50" width="236.00" height="4.60" fill="url(#ci20)" />
<linearGradient id="ci21"><stop offset="0.0000" stop-color="#aaf8ff"/><stop offset="0.0625" stop-color="#b4f8ff"/><stop offset="0.1250" stop-color="#bef8ff"/><stop offset="0.1875" stop-color="#c9f8ff"/><stop offset="0.2500" stop-color="#d3f8ff"/><stop offset="0.3125" stop-color="#def8ff"/><stop offset="0.3750" stop-color="#e8f8ff"/><stop offset="0.4375" stop-color="#f3f8ff"/><stop offset="0.5000" stop-color="#fff8ff"/><stop offset="0.5625" stop-color="#ffedf4"/><stop offset="0.6250" stop-color="#ffe3ea"/><stop offset="0.6875" stop-color="#ffdae1"/><stop offset="0.7500" stop-color="#ffd1d8"/><stop offset="0.8125" stop-color="#ffc9cf"/><stop offset="0.8750" stop-color="#ffc1c7"/><stop offset="0.9375" stop-color="#ffbac0"/><stop offset="1.0000" stop-color="#ffb3b8"/></linearGradient>
<rect x="339.50" y="675.50" width="236.00" height="4.60" fill="url(#ci21)" />
<linearGradient id="ci22"><stop offset="0.0000" stop-color="#abf6ff"/><stop offset="0.0625" stop-color="#b4f5ff"/><stop offset="0.1250" stop-color="#bef5ff"/><stop offset="0.1875" stop-color="#c9f5ff"/><stop offset="0.2500" stop-color="#d3f5ff"/><stop offset="0.3125" stop-color="#def5ff"/><stop offset="0.3750" stop-color="#e8f5ff"/><stop offset="0.4375" stop-color="#f3f5ff"/><stop offset="0.5000" stop-color="#fef5ff"/><stop offset="0.5625" stop-color="#ffebf5"/><stop offset="0.6250" stop-color="#ffe1ea"/><stop offset="0.6875" stop-color="#ffd7e1"/><stop offset="0.7500" stop-color="#ffcfd8"/><stop offset="0.8125" stop-color="#ffc6cf"/><stop offset="0.8750" stop-color="#ffbfc7"/><stop offset="0.9375" stop-color="#ffb7c0"/><stop offset="1.0000" stop-color="#ffb1b9"/></linearGradient>
<rect x="339.50" y="679.50" width="236.00" height="4.60" fill="url(#ci22)" />
<linearGradient id="ci23"><stop offset="0.0000" stop-color="#abf3ff"/><stop offset="0.0625" stop-color="#b5f3ff"/><stop offset="0.1250" stop-color="#bff2ff"/><stop offset="0.1875" stop-color="#c9f2ff"/><stop offset="0.2500" stop-color="#d3f2ff"/><stop offset="0.3125" stop-color="#def2ff"/><stop offset="0.3750" stop-color="#e8f2ff"/><stop offset="0.4375" stop-color="#f3f2ff"/><stop offset="0.5000" stop-color="#fef2ff"/><stop offset="0.5625" stop-color="#ffe8f5"/><stop offset="0.6250" stop-color="#ffdeeb"/><stop offset="0.6875" stop-color="#ffd5e1"/><stop offset="0.7500" stop-color="#ffccd8"/><stop offset="0.8125" stop-color="#ffc4d0"/><stop offset="0.8750" stop-color="#ffbdc8"/><stop offset="0.9375" stop-color="#ffb5c0"/><stop offset="1.0000" stop-color="#ffafb9"/></linearGradient>
<rect x="339.50" y="683.50" width="236.00" height="4.60" fill="url(#ci23)" />
<linearGradient id="ci24"><stop offset="0.0000" stop-color="#abf0ff"/><stop offset="0.0625" stop-color="#b5f0ff"/><stop offset="0.1250" stop-color="#bff0ff"/><stop offset="0.1875" stop-color="#c9f0ff"/><stop offset="0.2500" stop-color="#d3efff"/><stop offset="0.3125" stop-color="#ddefff"/><stop offset="0.3750" stop-color="#e8efff"/><stop offset="0.4375" stop-color="#f3efff"/><stop offset="0.5000" stop-color="#feefff"/><stop offset="0.5625" stop-color="#ffe5f5"/><stop offset="0.6250" stop-color="#ffdceb"/><stop offset="0.6875" stop-color="#ffd3e1"/><stop offset="0.7500" stop-color="#ffcad9"/><stop offset="0.8125" stop-color="#ffc2d0"/><stop offset="0.8750" stop-color="#ffbbc8"/><stop offset="0.9375" stop-color="#ffb3c1"/><stop offset="1.0000" stop-color="#ffadba"/></linearGradient>
<rect x="339.50" y="687.50" width="236.00" height="4.60" fill="url(#ci24)" />
<linearGradient id="ci25"><stop offset="0.0000" stop-color="#abedff"/><stop offset="0.0625" stop-color="#b5edff"/><stop offset="0.1250" stop-color="#bfedff"/><stop offset="0.1875" stop-color="#c9edff"/><stop offset="0.2500" stop-color="#d3edff"/><stop offset="0.3125" stop-color="#ddecff"/><stop offset="0.3750" stop-color="#e8ecff"/><stop offset="0.4375" stop-color="#f3ecff"/><stop offset="0.5000" stop-color="#feecff"/><stop offset="0.5625" stop-color="#ffe3f5"/><stop offset="0.6250" stop-color="#ffd9eb"/><stop offset="0.6875" stop-color="#ffd0e2"/><stop offset="0.7500" stop-color="#ffc8d9"/><stop offset="0.8125" stop-color="#ffc0d0"/><stop offset="0.8750" stop-color="#ffb8c9"/><stop offset="0.9375" stop-color="#ffb1c1"/><stop offset="1.0000" stop-color="#ffabba"/></linearGradient>
<rect x="339.50" y="691.50" width="236.00" height="4.60" fill="url(#ci25)" />
<linearGradient id="ci26"><stop offset="0.0000" stop-color="#abebff"/><stop offset="0.0625" stop-color="#b5eaff"/><stop offset="0.1250" stop-color="#bfeaff"/><stop offset="0.1875" stop-color="#c9eaff"/><stop offset="0.2500" stop-color="#d3eaff"/><stop offset="0.3125" stop-color="#ddeaff"/><stop offset="0.3750" stop-color="#e8e9ff"/><stop offset="0.4375" stop-color="#f3e9ff"/><stop offset="0.5000" stop-color="#fee9ff"/><stop offset="0.5625" stop-color="#ffe0f6"/><stop offset="0.6250" stop-color="#ffd7ec"/><stop offset="0.6875" stop-color="#ffcee2"/><stop offset="0.7500" stop-color="#ffc6d9"/><stop offset="0.8125" stop-color="#ffbed1"/><stop offset="0.8750" stop-color="#ffb6c9"/><stop offset="0.9375" stop-color="#ffafc1"/><stop offset="1.0000" stop-color="#ffa9ba"/></linearGradient>
<rect x="339.50" y="695.50" width="236.00" height="4.60" fill="url(#ci26)" />
<linearGradient id="ci27"><stop offset="0.0000" stop-color="#abe8ff"/><stop offset="0.0625" stop-color="#b5e8ff"/><stop offset="0.1250" stop-color="#bfe7ff"/><stop offset="0.1875" stop-color="#c9e7ff"/><stop offset="0.2500" stop-color="#d3e7ff"/><stop offset="0.3125" stop-color="#dde7ff"/><stop offset="0.3750" stop-color="#e8e7ff"/><stop offset="0.4375" stop-color="#f3e6ff"/><stop offset="0.5000" stop-color="#fde6ff"/><stop offset="0.5625" stop-color="#ffdef6"/><stop offset="0.6250" stop-color="#ffd4ec"/><stop offset="0.6875" stop-color="#ffcce2"/><stop offset="0.7500" stop-color="#ffc3d9"/><stop offset="0.8125" stop-color="#ffbcd1"/><stop offset="0.8750" stop-color="#ffb4c9"/><stop offset="0.9375" stop-color="#ffadc2"/><stop offset="1.0000" stop-color="#ffa7bb"/></linearGradient>
<rect x="339.50" y="699.50" width="236.00" height="4.60" fill="url(#ci27)" />
<linearGradient id="ci28"><stop offset="0.0000" stop-color="#ace5ff"/><stop offset="0.0625" stop-color="#b5e5ff"/><stop offset="0.1250" stop-color="#bfe5ff"/><stop offset="0.1875" stop-color="#c9e5ff"/><stop offset="0.2500" stop-color="#d3e4ff"/><stop offset="0.3125" stop-color="#dde4ff"/><stop offset="0.3750" stop-color="#e8e4ff"/><stop offset="0.4375" stop-color="#f2e3ff"/><stop offset="0.5000" stop-color="#fde3ff"/><stop offset="0.5625" stop-color="#ffdbf6"/><stop offset="0.6250" stop-color="#ffd2ec"/><stop offset="0.6875" stop-color="#ffc9e3"/><stop offset="0.7500" stop-color="#ffc1da"/><stop offset="0.8125" stop-color="#ffb9d1"/><stop offset="0.8750" stop-color="#ffb2ca"/><stop offset="0.9375" stop-color="#ffabc2"/><stop offset="1.0000" stop-color="#ffa5bb"/></linearGradient>
<rect x="339.50" y="703.50" width="236.00" height="4.60" fill="url(#ci28)" />
<linearGradient id="ci29"><stop offset="0.0000" stop-color="#ace3ff"/><stop offset="0.0625" stop-color="#b5e2ff"/><stop offset="0.1250" stop-color="#bfe2ff"/><stop offset="0.1875" stop-color="#c9e2ff"/><stop offset="0.2500" stop-color="#d3e2ff"/><stop offset="0.3125" stop-color="#dde1ff"/><stop offset="0.3750" stop-color="#e8e1ff"/><stop offset="0.4375" stop-color="#f2e1ff"/><stop offset="0.5000" stop-color="#fde0ff"/><stop offset="0.5625" stop-color="#ffd8f6"/><stop offset="0.6250" stop-color="#ffcfec"/><stop offset="0.6875" stop-color="#ffc7e3"/><stop offset="0.7500" stop-color="#ffbfda"/><stop offset="0.8125" stop-color="#ffb7d2"/><stop offset="0.8750" stop-color="#ffb0ca"/><stop offset="0.9375" stop-color="#ffa9c3"/><stop offset="1.0000" stop-color="#ffa3bb"/></linearGradient>
<rect x="339.50" y="707.50" width="236.00" height="4.60" fill="url(#ci29)" />
<linearGradient id="ci30"><stop offset="0.0000" stop-color="#ace0ff"/><stop offset="0.0625" stop-color="#b5e0ff"/><stop offset="0.1250" stop-color="#bfdfff"/><stop offset="0.1875" stop-color="#c9dfff"/><stop offset="0.2500" stop-color="#d3dfff"/><stop offset="0.3125" stop-color="#dddfff"/><stop offset="0.3750" stop-color="#e8deff"/><stop offset="0.4375" stop-color="#f2deff"/><stop offset="0.5000" stop-color="#fddeff"/><stop offset="0.5625" stop-color="#ffd6f7"/><stop offset="0.6250" stop-color="#ffcded"/><stop offset="0.6875" stop-color="#ffc5e3"/><stop offset="0.7500" stop-color="#ffbdda"/><stop offset="0.8125" stop-color="#ffb5d2"/><stop offset="0.8750" stop-color="#ffaeca"/><stop offset="0.9375" stop-color="#ffa8c3"/><stop offset="1.0000" stop-color="#ffa1bc"/></linearGradient>
<rect x="339.50" y="711.50" width="236.00" height="4.60" fill="url(#ci30)" />
<linearGradient id="ci31"><stop offset="0.0000" stop-color="#acddff"/><stop offset="0.0625" stop-color="#b6ddff"/><stop offset="0.1250" stop-color="#bfddff"/><stop offset="0.1875" stop-color="#c9dcff"/><stop offset="0.2500" stop-color="#d3dcff"/><stop offset="0.3125" stop-color="#dddcff"/><stop offset="0.3750" stop-color="#e7dcff"/><stop offset="0.4375" stop-color="#f2dbff"/><stop offset="0.5000" stop-color="#fddbff"/><stop offset="0.5625" stop-color="#ffd3f7"/><stop offset="0.6250" stop-color="#ffcbed"/><stop offset="0.6875" stop-color="#ffc2e4"/><stop offset="0.7500" stop-color="#ffbadb"/><stop offset="0.8125" stop-color="#ffb3d2"/><stop offset="0.8750" stop-color="#ffaccb"/><stop offset="0.9375" stop-color="#ffa6c3"/><stop offset="1.0000" stop-color="#ff9fbc"/></linearGradient>
<rect x="339.50" y="715.50" width="236.00" height="4.60" fill="url(#ci31)" />
<linearGradient id="ci32"><stop offset="0.0000" stop-color="#acdbff"/><stop offset="0.0625" stop-color="#b6dbff"/><stop offset="0.1250" stop-color="#bfdaff"/><stop offset="0.1875" stop-color="#c9daff"/><stop offset="0.2500" stop-color="#d3daff"/><stop offset="0.3125" stop-color="#ddd9ff"/><stop offset="0.3750" stop-color="#e7d9ff"/><stop offset="0.4375" stop-color="#f2d8ff"/><stop offset="0.5000" stop-color="#fcd8ff"/><stop offset="0.5625" stop-color="#ffd1f7"/><stop offset="0.6250" stop-color="#ffc8ed"/><stop offset="0.6875" stop-color="#ffc0e4"/><stop offset="0.7500" stop-color="#ffb8db"/><stop offset="0.8125" stop-color="#ffb1d3"/><stop offset="0.8750" stop-color="#ffaacb"/><stop offset="0.9375" stop-color="#ffa4c4"/><stop offset="1.0000" stop-color="#ff9dbd"/></linearGradient>
<rect x="339.50" y="719.50" width="236.00" height="4.60" fill="url(#ci32)" />
<linearGradient id="ci33"><stop offset="0.0000" stop-color="#acd8ff"/><stop offset="0.0625" stop-color="#b6d8ff"/><stop offset="0.1250" stop-color="#bfd8ff"/><stop offset="0.1875" stop-color="#c9d7ff"/><stop offset="0.2500" stop-color="#d3d7ff"/><stop offset="0.3125" stop-color="#ddd7ff"/><stop offset="0.3750" stop-color="#e7d6ff"/><stop offset="0.4375" stop-color="#f2d6ff"/><stop offset="0.5000" stop-color="#fcd5ff"/><stop offset="0.5625" stop-color="#ffcff7"/><stop offset="0.6250" stop-color="#ffc6ed"/><stop offset="0.6875" stop-color="#ffbee4"/><stop offset="0.7500" stop-color="#ffb6db"/><stop offset="0.8125" stop-color="#ffafd3"/><stop offset="0.8750" stop-color="#ffa8cb"/><stop offset="0.9375" stop-color="#ffa2c4"/><stop offset="1.0000" stop-color="#ff9cbd"/></linearGradient>
<rect x="339.50" y="723.50" width="236.00" height="4.60" fill="url(#ci33)" />
<linearGradient id="ci34"><stop offset="0.0000" stop-color="#add6ff"/><stop offset="0.0625" stop-color="#b6d5ff"/><stop offset="0.1250" stop-color="#bfd5ff"/><stop offset="0.1875" stop-color="#c9d5ff"/><stop offset="0.2500" stop-color="#d3d4ff"/><stop offset="0.3125" stop-color="#ddd4ff"/><stop offset="0.3750" stop-color="#e7d4ff"/><stop offset="0.4375" stop-color="#f1d3ff"/><stop offset="0.5000" stop-color="#fcd3ff"/><stop offset="0.5625" stop-color="#ffccf8"/><stop offset="0.6250" stop-color="#ffc4ee"/><stop offset="0.6875" stop-color="#ffbce4"/><stop offset="0.7500" stop-color="#ffb4dc"/><stop offset="0.8125" stop-color="#ffadd3"/><stop offset="0.8750" stop-color="#ffa6cc"/><stop offset="0.9375" stop-color="#ffa0c4"/><stop offset="1.0000" stop-color="#ff9abd"/></linearGradient>
<rect x="339.50" y="727.50" width="236.00" height="4.60" fill="url(#ci34)" />
<linearGradient id="ci35"><stop offset="0.0000" stop-color="#add3ff"/><stop offset="0.0625" stop-color="#b6d3ff"/><stop offset="0.1250" stop-color="#c0d3ff"/><stop offset="0.1875" stop-color="#c9d2ff"/><stop offset="0.2500" stop-color="#d3d2ff"/><stop offset="0.3125" stop-color="#ddd1ff"/><stop offset="0.3750" stop-color="#e7d1ff"/><stop offset="0.4375" stop-color="#f1d0ff"/><stop offset="0.5000" stop-color="#fcd0ff"/><stop offset="0.5625" stop-color="#ffcaf8"/><stop offset="0.6250" stop-color="#ffc1ee"/><stop offset="0.6875" stop-color="#ffb9e5"/><stop offset="0.7500" stop-color="#ffb2dc"/><stop offset="0.8125" stop-color="#ffabd4"/><stop offset="0.8750" stop-color="#ffa4cc"/><stop offset="0.9375" stop-color="#ff9ec5"/><stop offset="1.0000" stop-color="#ff98be"/></linearGradient>
<rect x="339.50" y="731.50" width="236.00" height="4.60" fill="url(#ci35)" />
<linearGradient id="ci36"><stop offset="0.0000" stop-color="#add1ff"/><stop offset="0.0625" stop-color="#b6d0ff"/><stop offset="0.1250" stop-color="#c0d0ff"/><stop offset="0.1875" stop-color="#c9d0ff"/><stop offset="0.2500" stop-color="#d3cfff"/><stop offset="0.3125" stop-color="#ddcfff"/><stop offset="0.3750" stop-color="#e7ceff"/><stop offset="0.4375" stop-color="#f1ceff"/><stop offset="0.5000" stop-color="#fccdff"/><stop offset="0.5625" stop-color="#ffc7f8"/><stop offset="0.6250" stop-color="#ffbfee"/><stop offset="0.6875" stop-color="#ffb7e5"/><stop offset="0.7500" stop-color="#ffb0dc"/><stop offset="0.8125" stop-color="#ffa9d4"/><stop offset="0.8750" stop-color="#ffa2cc"/><stop offset="0.9375" stop-color="#ff9cc5"/><stop offset="1.0000" stop-color="#ff96be"/></linearGradient>
<rect x="339.50" y="735.50" width="236.00" height="4.60" fill="url(#ci36)" />
<linearGradient id="ci37"><stop offset="0.0000" stop-color="#adceff"/><stop offset="0.0625" stop-color="#b6ceff"/><stop offset="0.1250" stop-color="#c0cdff"/><stop offset="0.1875" stop-color="#c9cdff"/><stop offset="0.2500" stop-color="#d3cdff"/><stop offset="0.3125" stop-color="#ddccff"/><stop offset="0.3750" stop-color="#e7ccff"/><stop offset="0.4375" stop-color="#f1cbff"/><stop offset="0.5000" stop-color="#fbcbff"/><stop offset="0.5625" stop-color="#ffc5f8"/><stop offset="0.6250" stop-color="#ffbdee"/><stop offset="0.6875" stop-color="#ffb5e5"/><stop offset="0.7500" stop-color="#ffaedd"/><stop offset="0.8125" stop-color="#ffa7d4"/><stop offset="0.8750" stop-color="#ffa0cd"/><stop offset="0.9375" stop-color="#ff9ac5"/><stop offset="1.0000" stop-color="#ff94be"/></linearGradient>
<rect x="339.50" y="739.50" width="236.00" height="4.60" fill="url(#ci37)" />
<linearGradient id="ci38"><stop offset="0.0000" stop-color="#adccff"/><stop offset="0.0625" stop-color="#b6cbff"/><stop offset="0.1250" stop-color="#c0cbff"/><stop offset="0.1875" stop-color="#c9cbff"/><stop offset="0.2500" stop-color="#d3caff"/><stop offset="0.3125" stop-color="#ddcaff"/><stop offset="0.3750" stop-color="#e7c9ff"/><stop offset="0.4375" stop-color="#f1c9ff"/><stop offset="0.5000" stop-color="#fbc8ff"/><stop offset="0.5625" stop-color="#ffc3f8"/><stop offset="0.6250" stop-color="#ffbaef"/><stop offset="0.6875" stop-color="#ffb3e5"/><stop offset="0.7500" stop-color="#ffacdd"/><stop offset="0.8125" stop-color="#ffa5d5"/><stop offset="0.8750" stop-color="#ff9ecd"/><stop offset="0.9375" stop-color="#ff98c6"/><stop offset="1.0000" stop-color="#ff93bf"/></linearGradient>
<rect x="339.50" y="743.50" width="236.00" height="4.00" fill="url(#ci38)" />
</g>
<polyline points="609.9,597.9 578.4,614.7 550.1,630.6 524.4,645.4 501.2,659.3 480.1,672.3 460.9,684.4 443.4,695.8 427.2,706.5 412.4,716.5 398.8,725.8 386.2,734.6 374.5,742.9 363.7,750.7 353.7,758.0 344.3,764.9 335.6,771.4" fill="none" stroke="#080808" stroke-width="2.7" clip-path="url(#cCIE)"/>
<g clip-path="url(#cCIE)">
<circle cx="397.1" cy="725.2" r="3.9" fill="rgb(26,26,26)" stroke="#1e1e1e" stroke-width="1"/>
<circle cx="442.5" cy="683.1" r="3.9" fill="rgb(26,26,26)" stroke="#1e1e1e" stroke-width="1"/>
<circle cx="462.8" cy="668.5" r="3.9" fill="rgb(38,38,38)" stroke="#1e1e1e" stroke-width="1"/>
<circle cx="457.6" cy="674.7" r="3.9" fill="rgb(51,51,51)" stroke="#1e1e1e" stroke-width="1"/>
<circle cx="467.1" cy="661.1" r="3.9" fill="rgb(64,64,64)" stroke="#1e1e1e" stroke-width="1"/>
<rect x="451.1" y="662" width="12" height="12" fill="none" stroke="#060606" stroke-width="2"/>
<circle cx="455.8" cy="667.0" r="3.9" fill="rgb(76,76,76)" stroke="#1e1e1e" stroke-width="1"/>
<circle cx="460.5" cy="665.7" r="3.9" fill="rgb(89,89,89)" stroke="#1e1e1e" stroke-width="1"/>
<circle cx="457.2" cy="666.3" r="3.9" fill="rgb(102,102,102)" stroke="#1e1e1e" stroke-width="1"/>
<circle cx="459.5" cy="666.3" r="3.9" fill="rgb(115,115,115)" stroke="#1e1e1e" stroke-width="1"/>
<circle cx="459.1" cy="667.0" r="3.9" fill="rgb(128,128,128)" stroke="#1e1e1e" stroke-width="1"/>
<circle cx="462.4" cy="664.5" r="3.9" fill="rgb(140,140,140)" stroke="#1e1e1e" stroke-width="1"/>
<circle cx="456.2" cy="667.9" r="3.9" fill="rgb(153,153,153)" stroke="#1e1e1e" stroke-width="1"/>
<circle cx="458.6" cy="667.3" r="3.9" fill="rgb(166,166,166)" stroke="#1e1e1e" stroke-width="1"/>
<circle cx="457.6" cy="666.7" r="3.9" fill="rgb(178,178,178)" stroke="#1e1e1e" stroke-width="1"/>
<circle cx="460.0" cy="666.0" r="3.9" fill="rgb(191,191,191)" stroke="#1e1e1e" stroke-width="1"/>
<circle cx="458.1" cy="667.0" r="3.9" fill="rgb(204,204,204)" stroke="#1e1e1e" stroke-width="1"/>
<circle cx="459.1" cy="665.7" r="3.9" fill="rgb(217,217,217)" stroke="#1e1e1e" stroke-width="1"/>
<circle cx="457.2" cy="667.3" r="3.9" fill="rgb(230,230,230)" stroke="#1e1e1e" stroke-width="1"/>
<circle cx="459.5" cy="666.3" r="3.9" fill="rgb(242,242,242)" stroke="#1e1e1e" stroke-width="1"/>
<circle cx="458.6" cy="667.6" r="3.9" fill="rgb(255,255,255)" stroke="#1e1e1e" stroke-width="1"/>
<circle cx="458.5" cy="667.4" r="3.9" fill="#ffffff" stroke="#1e1e1e" stroke-width="1"/>
</g>
<g shape-rendering="crispEdges">
<rect x="339.50" y="591.50" width="236.00" height="156.00" fill="none" stroke="#9c9c9c" stroke-width="1"/>
<line x1="349.50" y1="747.50" x2="349.50" y2="753.00" stroke="#9c9c9c" stroke-width="1" />
<line x1="397.50" y1="747.50" x2="397.50" y2="753.00" stroke="#9c9c9c" stroke-width="1" />
<line x1="444.50" y1="747.50" x2="444.50" y2="753.00" stroke="#9c9c9c" stroke-width="1" />
<line x1="491.50" y1="747.50" x2="491.50" y2="753.00" stroke="#9c9c9c" stroke-width="1" />
<line x1="539.50" y1="747.50" x2="539.50" y2="753.00" stroke="#9c9c9c" stroke-width="1" />
<line x1="334.50" y1="698.50" x2="339.50" y2="698.50" stroke="#9c9c9c" stroke-width="1" />
<line x1="334.50" y1="636.50" x2="339.50" y2="636.50" stroke="#9c9c9c" stroke-width="1" />
</g>
<text x="349.8" y="767.0" font-size="12.4" fill="#d4d4d4" text-anchor="middle" textLength="24.7" lengthAdjust="spacingAndGlyphs" stroke="#d4d4d4" stroke-width="0.3">0,29</text>
<text x="397.1" y="767.0" font-size="12.4" fill="#d4d4d4" text-anchor="middle" textLength="17.6" lengthAdjust="spacingAndGlyphs" stroke="#d4d4d4" stroke-width="0.3">0,3</text>
<text x="444.4" y="767.0" font-size="12.4" fill="#d4d4d4" text-anchor="middle" textLength="24.7" lengthAdjust="spacingAndGlyphs" stroke="#d4d4d4" stroke-width="0.3">0,31</text>
<text x="491.7" y="767.0" font-size="12.4" fill="#d4d4d4" text-anchor="middle" textLength="24.7" lengthAdjust="spacingAndGlyphs" stroke="#d4d4d4" stroke-width="0.3">0,32</text>
<text x="539.0" y="767.0" font-size="12.4" fill="#d4d4d4" text-anchor="middle" textLength="24.7" lengthAdjust="spacingAndGlyphs" stroke="#d4d4d4" stroke-width="0.3">0,33</text>
<text x="333.6" y="703.1" font-size="12.4" fill="#d4d4d4" text-anchor="end" textLength="24.7" lengthAdjust="spacingAndGlyphs" stroke="#d4d4d4" stroke-width="0.3">0,32</text>
<text x="333.6" y="641.1" font-size="12.4" fill="#d4d4d4" text-anchor="end" textLength="24.7" lengthAdjust="spacingAndGlyphs" stroke="#d4d4d4" stroke-width="0.3">0,34</text>
<rect x="585.00" y="563.00" width="973.00" height="213.00" fill="#2a2a2a" />
<line x1="585.00" y1="563.50" x2="1558.00" y2="563.50" stroke="#1e1e1e" stroke-width="1" shape-rendering="crispEdges"/>
<rect x="586.00" y="563.80" width="969.00" height="24.00" fill="url(#ghead)" />
<clipPath id="cTAB"><rect x="586" y="563" width="968" height="202"/></clipPath>
<g clip-path="url(#cTAB)">
<text x="731.3" y="580.9" font-size="12.6" fill="#f0f0f0" text-anchor="middle" textLength="6.5" lengthAdjust="spacingAndGlyphs">0</text>
<text x="792.9" y="580.9" font-size="12.6" fill="#f0f0f0" text-anchor="middle" textLength="6.5" lengthAdjust="spacingAndGlyphs">5</text>
<text x="854.5" y="580.9" font-size="12.6" fill="#f0f0f0" text-anchor="middle" textLength="13.1" lengthAdjust="spacingAndGlyphs">10</text>
<text x="916.1" y="580.9" font-size="12.6" fill="#f0f0f0" text-anchor="middle" textLength="13.1" lengthAdjust="spacingAndGlyphs">15</text>
<text x="977.7" y="580.9" font-size="12.6" fill="#f0f0f0" text-anchor="middle" textLength="13.1" lengthAdjust="spacingAndGlyphs">20</text>
<text x="1039.3" y="580.9" font-size="12.6" fill="#f0f0f0" text-anchor="middle" textLength="13.1" lengthAdjust="spacingAndGlyphs">25</text>
<text x="1100.9" y="580.9" font-size="12.6" fill="#f0f0f0" text-anchor="middle" textLength="13.1" lengthAdjust="spacingAndGlyphs">30</text>
<text x="1162.5" y="580.9" font-size="12.6" fill="#f0f0f0" text-anchor="middle" textLength="13.1" lengthAdjust="spacingAndGlyphs">35</text>
<text x="1224.1" y="580.9" font-size="12.6" fill="#f0f0f0" text-anchor="middle" textLength="13.1" lengthAdjust="spacingAndGlyphs">40</text>
<text x="1285.7" y="580.9" font-size="12.6" fill="#f0f0f0" text-anchor="middle" textLength="13.1" lengthAdjust="spacingAndGlyphs">45</text>
<text x="1347.3" y="580.9" font-size="12.6" fill="#f0f0f0" text-anchor="middle" textLength="13.1" lengthAdjust="spacingAndGlyphs">50</text>
<text x="1408.9" y="580.9" font-size="12.6" fill="#f0f0f0" text-anchor="middle" textLength="13.1" lengthAdjust="spacingAndGlyphs">55</text>
<text x="1470.5" y="580.9" font-size="12.6" fill="#f0f0f0" text-anchor="middle" textLength="13.1" lengthAdjust="spacingAndGlyphs">60</text>
<text x="1532.1" y="580.9" font-size="12.6" fill="#f0f0f0" text-anchor="middle" textLength="13.1" lengthAdjust="spacingAndGlyphs">65</text>
<rect x="586.00" y="587.80" width="969.00" height="22.00" fill="#414141" />
<text x="595.2" y="603.6" font-size="12.4" fill="#f4f4f4" textLength="45.0" lengthAdjust="spacingAndGlyphs" font-weight="bold">x: CIE31</text>
<text x="703.6" y="603.6" font-size="12.8" fill="#f4f4f4" textLength="35.6" lengthAdjust="spacingAndGlyphs" stroke="#f4f4f4" stroke-width="0.2">0,2862</text>
<text x="765.2" y="603.6" font-size="12.8" fill="#f4f4f4" textLength="35.6" lengthAdjust="spacingAndGlyphs" stroke="#f4f4f4" stroke-width="0.2">0,3000</text>
<text x="826.8" y="603.6" font-size="12.8" fill="#f4f4f4" textLength="35.6" lengthAdjust="spacingAndGlyphs" stroke="#f4f4f4" stroke-width="0.2">0,3096</text>
<text x="888.4" y="603.6" font-size="12.8" fill="#f4f4f4" textLength="35.6" lengthAdjust="spacingAndGlyphs" stroke="#f4f4f4" stroke-width="0.2">0,3139</text>
<text x="950.0" y="603.6" font-size="12.8" fill="#f4f4f4" textLength="35.6" lengthAdjust="spacingAndGlyphs" stroke="#f4f4f4" stroke-width="0.2">0,3128</text>
<text x="1011.6" y="603.6" font-size="12.8" fill="#f4f4f4" textLength="35.6" lengthAdjust="spacingAndGlyphs" stroke="#f4f4f4" stroke-width="0.2">0,3148</text>
<text x="1073.2" y="603.6" font-size="12.8" fill="#f4f4f4" textLength="35.6" lengthAdjust="spacingAndGlyphs" stroke="#f4f4f4" stroke-width="0.2">0,3124</text>
<text x="1134.8" y="603.6" font-size="12.8" fill="#f4f4f4" textLength="35.6" lengthAdjust="spacingAndGlyphs" stroke="#f4f4f4" stroke-width="0.2">0,3134</text>
<text x="1196.4" y="603.6" font-size="12.8" fill="#f4f4f4" textLength="35.6" lengthAdjust="spacingAndGlyphs" stroke="#f4f4f4" stroke-width="0.2">0,3127</text>
<text x="1258.0" y="603.6" font-size="12.8" fill="#f4f4f4" textLength="35.6" lengthAdjust="spacingAndGlyphs" stroke="#f4f4f4" stroke-width="0.2">0,3132</text>
<text x="1319.6" y="603.6" font-size="12.8" fill="#f4f4f4" textLength="35.6" lengthAdjust="spacingAndGlyphs" stroke="#f4f4f4" stroke-width="0.2">0,3131</text>
<text x="1381.2" y="603.6" font-size="12.8" fill="#f4f4f4" textLength="35.6" lengthAdjust="spacingAndGlyphs" stroke="#f4f4f4" stroke-width="0.2">0,3138</text>
<text x="1442.8" y="603.6" font-size="12.8" fill="#f4f4f4" textLength="35.6" lengthAdjust="spacingAndGlyphs" stroke="#f4f4f4" stroke-width="0.2">0,3125</text>
<text x="1504.4" y="603.6" font-size="12.8" fill="#f4f4f4" textLength="35.6" lengthAdjust="spacingAndGlyphs" stroke="#f4f4f4" stroke-width="0.2">0,3130</text>
<rect x="586.00" y="609.80" width="969.00" height="22.00" fill="#818181" />
<text x="595.2" y="625.6" font-size="12.4" fill="#f4f4f4" textLength="45.0" lengthAdjust="spacingAndGlyphs" font-weight="bold">y: CIE31</text>
<text x="703.6" y="625.6" font-size="12.8" fill="#f4f4f4" textLength="35.6" lengthAdjust="spacingAndGlyphs" stroke="#f4f4f4" stroke-width="0.2">0,2860</text>
<text x="765.2" y="625.6" font-size="12.8" fill="#f4f4f4" textLength="35.6" lengthAdjust="spacingAndGlyphs" stroke="#f4f4f4" stroke-width="0.2">0,3105</text>
<text x="826.8" y="625.6" font-size="12.8" fill="#f4f4f4" textLength="35.6" lengthAdjust="spacingAndGlyphs" stroke="#f4f4f4" stroke-width="0.2">0,3241</text>
<text x="888.4" y="625.6" font-size="12.8" fill="#f4f4f4" textLength="35.6" lengthAdjust="spacingAndGlyphs" stroke="#f4f4f4" stroke-width="0.2">0,3288</text>
<text x="950.0" y="625.6" font-size="12.8" fill="#f4f4f4" textLength="35.6" lengthAdjust="spacingAndGlyphs" stroke="#f4f4f4" stroke-width="0.2">0,3268</text>
<text x="1011.6" y="625.6" font-size="12.8" fill="#f4f4f4" textLength="35.6" lengthAdjust="spacingAndGlyphs" stroke="#f4f4f4" stroke-width="0.2">0,3312</text>
<text x="1073.2" y="625.6" font-size="12.8" fill="#f4f4f4" textLength="35.6" lengthAdjust="spacingAndGlyphs" stroke="#f4f4f4" stroke-width="0.2">0,3293</text>
<text x="1134.8" y="625.6" font-size="12.8" fill="#f4f4f4" textLength="35.6" lengthAdjust="spacingAndGlyphs" stroke="#f4f4f4" stroke-width="0.2">0,3297</text>
<text x="1196.4" y="625.6" font-size="12.8" fill="#f4f4f4" textLength="35.6" lengthAdjust="spacingAndGlyphs" stroke="#f4f4f4" stroke-width="0.2">0,3295</text>
<text x="1258.0" y="625.6" font-size="12.8" fill="#f4f4f4" textLength="35.6" lengthAdjust="spacingAndGlyphs" stroke="#f4f4f4" stroke-width="0.2">0,3295</text>
<text x="1319.6" y="625.6" font-size="12.8" fill="#f4f4f4" textLength="35.6" lengthAdjust="spacingAndGlyphs" stroke="#f4f4f4" stroke-width="0.2">0,3293</text>
<text x="1381.2" y="625.6" font-size="12.8" fill="#f4f4f4" textLength="35.6" lengthAdjust="spacingAndGlyphs" stroke="#f4f4f4" stroke-width="0.2">0,3301</text>
<text x="1442.8" y="625.6" font-size="12.8" fill="#f4f4f4" textLength="35.6" lengthAdjust="spacingAndGlyphs" stroke="#f4f4f4" stroke-width="0.2">0,3290</text>
<text x="1504.4" y="625.6" font-size="12.8" fill="#f4f4f4" textLength="35.6" lengthAdjust="spacingAndGlyphs" stroke="#f4f4f4" stroke-width="0.2">0,3292</text>
<rect x="586.00" y="631.80" width="969.00" height="22.00" fill="#414141" />
<text x="595.2" y="647.6" font-size="12.4" fill="#f4f4f4" textLength="7.5" lengthAdjust="spacingAndGlyphs" font-weight="bold">Y</text>
<text x="703.6" y="647.6" font-size="12.8" fill="#f4f4f4" textLength="35.6" lengthAdjust="spacingAndGlyphs" stroke="#f4f4f4" stroke-width="0.2">0,3603</text>
<text x="765.2" y="647.6" font-size="12.8" fill="#f4f4f4" textLength="35.6" lengthAdjust="spacingAndGlyphs" stroke="#f4f4f4" stroke-width="0.2">0,8154</text>
<text x="826.8" y="647.6" font-size="12.8" fill="#f4f4f4" textLength="35.6" lengthAdjust="spacingAndGlyphs" stroke="#f4f4f4" stroke-width="0.2">2,6756</text>
<text x="888.4" y="647.6" font-size="12.8" fill="#f4f4f4" textLength="35.6" lengthAdjust="spacingAndGlyphs" stroke="#f4f4f4" stroke-width="0.2">5,7895</text>
<text x="950.0" y="647.6" font-size="12.8" fill="#f4f4f4" textLength="42.2" lengthAdjust="spacingAndGlyphs" stroke="#f4f4f4" stroke-width="0.2">10,7699</text>
<text x="1011.6" y="647.6" font-size="12.8" fill="#f4f4f4" textLength="42.2" lengthAdjust="spacingAndGlyphs" stroke="#f4f4f4" stroke-width="0.2">17,8595</text>
<text x="1073.2" y="647.6" font-size="12.8" fill="#f4f4f4" textLength="42.2" lengthAdjust="spacingAndGlyphs" stroke="#f4f4f4" stroke-width="0.2">25,3705</text>
<text x="1134.8" y="647.6" font-size="12.8" fill="#f4f4f4" textLength="42.2" lengthAdjust="spacingAndGlyphs" stroke="#f4f4f4" stroke-width="0.2">36,4244</text>
<text x="1196.4" y="647.6" font-size="12.8" fill="#f4f4f4" textLength="42.2" lengthAdjust="spacingAndGlyphs" stroke="#f4f4f4" stroke-width="0.2">48,6004</text>
<text x="1258.0" y="647.6" font-size="12.8" fill="#f4f4f4" textLength="42.2" lengthAdjust="spacingAndGlyphs" stroke="#f4f4f4" stroke-width="0.2">63,0541</text>
<text x="1319.6" y="647.6" font-size="12.8" fill="#f4f4f4" textLength="42.2" lengthAdjust="spacingAndGlyphs" stroke="#f4f4f4" stroke-width="0.2">79,3657</text>
<text x="1381.2" y="647.6" font-size="12.8" fill="#f4f4f4" textLength="42.2" lengthAdjust="spacingAndGlyphs" stroke="#f4f4f4" stroke-width="0.2">96,9255</text>
<text x="1442.8" y="647.6" font-size="12.8" fill="#f4f4f4" textLength="48.8" lengthAdjust="spacingAndGlyphs" stroke="#f4f4f4" stroke-width="0.2">117,6208</text>
<text x="1504.4" y="647.6" font-size="12.8" fill="#f4f4f4" textLength="48.8" lengthAdjust="spacingAndGlyphs" stroke="#f4f4f4" stroke-width="0.2">140,6342</text>
<rect x="586.00" y="653.80" width="969.00" height="22.00" fill="#818181" />
<text x="595.2" y="669.6" font-size="12.4" fill="#f4f4f4" textLength="47.0" lengthAdjust="spacingAndGlyphs" font-weight="bold">Target Y</text>
<text x="703.6" y="669.6" font-size="12.8" fill="#f4f4f4" textLength="35.6" lengthAdjust="spacingAndGlyphs" stroke="#f4f4f4" stroke-width="0.2">0,0000</text>
<text x="765.2" y="669.6" font-size="12.8" fill="#f4f4f4" textLength="35.6" lengthAdjust="spacingAndGlyphs" stroke="#f4f4f4" stroke-width="0.2">1,4534</text>
<text x="826.8" y="669.6" font-size="12.8" fill="#f4f4f4" textLength="35.6" lengthAdjust="spacingAndGlyphs" stroke="#f4f4f4" stroke-width="0.2">3,7302</text>
<text x="888.4" y="669.6" font-size="12.8" fill="#f4f4f4" textLength="35.6" lengthAdjust="spacingAndGlyphs" stroke="#f4f4f4" stroke-width="0.2">6,9992</text>
<text x="950.0" y="669.6" font-size="12.8" fill="#f4f4f4" textLength="42.2" lengthAdjust="spacingAndGlyphs" stroke="#f4f4f4" stroke-width="0.2">11,9546</text>
<text x="1011.6" y="669.6" font-size="12.8" fill="#f4f4f4" textLength="42.2" lengthAdjust="spacingAndGlyphs" stroke="#f4f4f4" stroke-width="0.2">18,5141</text>
<text x="1073.2" y="669.6" font-size="12.8" fill="#f4f4f4" textLength="42.2" lengthAdjust="spacingAndGlyphs" stroke="#f4f4f4" stroke-width="0.2">26,0984</text>
<text x="1134.8" y="669.6" font-size="12.8" fill="#f4f4f4" textLength="42.2" lengthAdjust="spacingAndGlyphs" stroke="#f4f4f4" stroke-width="0.2">36,0748</text>
<text x="1196.4" y="669.6" font-size="12.8" fill="#f4f4f4" textLength="42.2" lengthAdjust="spacingAndGlyphs" stroke="#f4f4f4" stroke-width="0.2">47,9806</text>
<text x="1258.0" y="669.6" font-size="12.8" fill="#f4f4f4" textLength="42.2" lengthAdjust="spacingAndGlyphs" stroke="#f4f4f4" stroke-width="0.2">61,9098</text>
<text x="1319.6" y="669.6" font-size="12.8" fill="#f4f4f4" textLength="42.2" lengthAdjust="spacingAndGlyphs" stroke="#f4f4f4" stroke-width="0.2">77,9503</text>
<text x="1381.2" y="669.6" font-size="12.8" fill="#f4f4f4" textLength="42.2" lengthAdjust="spacingAndGlyphs" stroke="#f4f4f4" stroke-width="0.2">94,7024</text>
<text x="1442.8" y="669.6" font-size="12.8" fill="#f4f4f4" textLength="48.8" lengthAdjust="spacingAndGlyphs" stroke="#f4f4f4" stroke-width="0.2">115,0317</text>
<text x="1504.4" y="669.6" font-size="12.8" fill="#f4f4f4" textLength="48.8" lengthAdjust="spacingAndGlyphs" stroke="#f4f4f4" stroke-width="0.2">137,7022</text>
<rect x="586.00" y="675.80" width="969.00" height="22.00" fill="#414141" />
<text x="595.2" y="691.6" font-size="12.4" fill="#f4f4f4" textLength="96.0" lengthAdjust="spacingAndGlyphs" font-weight="bold">Gamma Log/Log</text>
<text x="703.6" y="691.6" font-size="12.8" fill="#f4f4f4" textLength="35.6" lengthAdjust="spacingAndGlyphs" stroke="#f4f4f4" stroke-width="0.2">1,2778</text>
<text x="765.2" y="691.6" font-size="12.8" fill="#f4f4f4" textLength="35.6" lengthAdjust="spacingAndGlyphs" stroke="#f4f4f4" stroke-width="0.2">2,0473</text>
<text x="826.8" y="691.6" font-size="12.8" fill="#f4f4f4" textLength="35.6" lengthAdjust="spacingAndGlyphs" stroke="#f4f4f4" stroke-width="0.2">2,1483</text>
<text x="888.4" y="691.6" font-size="12.8" fill="#f4f4f4" textLength="35.6" lengthAdjust="spacingAndGlyphs" stroke="#f4f4f4" stroke-width="0.2">2,1711</text>
<text x="950.0" y="691.6" font-size="12.8" fill="#f4f4f4" textLength="35.6" lengthAdjust="spacingAndGlyphs" stroke="#f4f4f4" stroke-width="0.2">2,1824</text>
<text x="1011.6" y="691.6" font-size="12.8" fill="#f4f4f4" textLength="35.6" lengthAdjust="spacingAndGlyphs" stroke="#f4f4f4" stroke-width="0.2">2,1750</text>
<text x="1073.2" y="691.6" font-size="12.8" fill="#f4f4f4" textLength="35.6" lengthAdjust="spacingAndGlyphs" stroke="#f4f4f4" stroke-width="0.2">2,1938</text>
<text x="1134.8" y="691.6" font-size="12.8" fill="#f4f4f4" textLength="35.6" lengthAdjust="spacingAndGlyphs" stroke="#f4f4f4" stroke-width="0.2">2,1793</text>
<text x="1196.4" y="691.6" font-size="12.8" fill="#f4f4f4" textLength="35.6" lengthAdjust="spacingAndGlyphs" stroke="#f4f4f4" stroke-width="0.2">2,1888</text>
<text x="1258.0" y="691.6" font-size="12.8" fill="#f4f4f4" textLength="35.6" lengthAdjust="spacingAndGlyphs" stroke="#f4f4f4" stroke-width="0.2">2,1916</text>
<text x="1319.6" y="691.6" font-size="12.8" fill="#f4f4f4" textLength="35.6" lengthAdjust="spacingAndGlyphs" stroke="#f4f4f4" stroke-width="0.2">2,1983</text>
<text x="1381.2" y="691.6" font-size="12.8" fill="#f4f4f4" textLength="35.6" lengthAdjust="spacingAndGlyphs" stroke="#f4f4f4" stroke-width="0.2">2,1935</text>
<text x="1442.8" y="691.6" font-size="12.8" fill="#f4f4f4" textLength="35.6" lengthAdjust="spacingAndGlyphs" stroke="#f4f4f4" stroke-width="0.2">2,1959</text>
<text x="1504.4" y="691.6" font-size="12.8" fill="#f4f4f4" textLength="35.6" lengthAdjust="spacingAndGlyphs" stroke="#f4f4f4" stroke-width="0.2">2,1968</text>
<rect x="586.00" y="697.80" width="969.00" height="22.00" fill="#818181" />
<text x="595.2" y="713.6" font-size="12.4" fill="#f4f4f4" textLength="21.5" lengthAdjust="spacingAndGlyphs" font-weight="bold">CCT</text>
<text x="703.6" y="713.6" font-size="12.8" fill="#f4f4f4" textLength="55.3" lengthAdjust="spacingAndGlyphs" stroke="#f4f4f4" stroke-width="0.2">9428,0000</text>
<text x="765.2" y="713.6" font-size="12.8" fill="#f4f4f4" textLength="55.3" lengthAdjust="spacingAndGlyphs" stroke="#f4f4f4" stroke-width="0.2">7515,0000</text>
<text x="826.8" y="713.6" font-size="12.8" fill="#f4f4f4" textLength="55.3" lengthAdjust="spacingAndGlyphs" stroke="#f4f4f4" stroke-width="0.2">6718,0000</text>
<text x="888.4" y="713.6" font-size="12.8" fill="#f4f4f4" textLength="55.3" lengthAdjust="spacingAndGlyphs" stroke="#f4f4f4" stroke-width="0.2">6439,0000</text>
<text x="950.0" y="713.6" font-size="12.8" fill="#f4f4f4" textLength="55.3" lengthAdjust="spacingAndGlyphs" stroke="#f4f4f4" stroke-width="0.2">6516,0000</text>
<text x="1011.6" y="713.6" font-size="12.8" fill="#f4f4f4" textLength="55.3" lengthAdjust="spacingAndGlyphs" stroke="#f4f4f4" stroke-width="0.2">6379,0000</text>
<text x="1073.2" y="713.6" font-size="12.8" fill="#f4f4f4" textLength="55.3" lengthAdjust="spacingAndGlyphs" stroke="#f4f4f4" stroke-width="0.2">6520,0000</text>
<text x="1134.8" y="713.6" font-size="12.8" fill="#f4f4f4" textLength="55.3" lengthAdjust="spacingAndGlyphs" stroke="#f4f4f4" stroke-width="0.2">6463,0000</text>
<text x="1196.4" y="713.6" font-size="12.8" fill="#f4f4f4" textLength="55.3" lengthAdjust="spacingAndGlyphs" stroke="#f4f4f4" stroke-width="0.2">6503,0000</text>
<text x="1258.0" y="713.6" font-size="12.8" fill="#f4f4f4" textLength="55.3" lengthAdjust="spacingAndGlyphs" stroke="#f4f4f4" stroke-width="0.2">6473,0000</text>
<text x="1319.6" y="713.6" font-size="12.8" fill="#f4f4f4" textLength="55.3" lengthAdjust="spacingAndGlyphs" stroke="#f4f4f4" stroke-width="0.2">6478,0000</text>
<text x="1381.2" y="713.6" font-size="12.8" fill="#f4f4f4" textLength="55.3" lengthAdjust="spacingAndGlyphs" stroke="#f4f4f4" stroke-width="0.2">6438,0000</text>
<text x="1442.8" y="713.6" font-size="12.8" fill="#f4f4f4" textLength="55.3" lengthAdjust="spacingAndGlyphs" stroke="#f4f4f4" stroke-width="0.2">6517,0000</text>
<text x="1504.4" y="713.6" font-size="12.8" fill="#f4f4f4" textLength="55.3" lengthAdjust="spacingAndGlyphs" stroke="#f4f4f4" stroke-width="0.2">6487,0000</text>
<rect x="586.00" y="719.80" width="969.00" height="22.00" fill="#414141" />
<text x="595.2" y="735.6" font-size="12.4" fill="#f4f4f4" textLength="44.5" lengthAdjust="spacingAndGlyphs" font-weight="bold">ΔE 2000</text>
<text x="703.6" y="735.6" font-size="12.8" fill="#f4f4f4" textLength="35.6" lengthAdjust="spacingAndGlyphs" stroke="#f4f4f4" stroke-width="0.2">0,8290</text>
<text x="765.2" y="735.6" font-size="12.8" fill="#f4f4f4" textLength="35.6" lengthAdjust="spacingAndGlyphs" stroke="#f4f4f4" stroke-width="0.2">1,0963</text>
<text x="826.8" y="735.6" font-size="12.8" fill="#f4f4f4" textLength="35.6" lengthAdjust="spacingAndGlyphs" stroke="#f4f4f4" stroke-width="0.2">1,6522</text>
<text x="888.4" y="735.6" font-size="12.8" fill="#f4f4f4" textLength="35.6" lengthAdjust="spacingAndGlyphs" stroke="#f4f4f4" stroke-width="0.2">1,2781</text>
<text x="950.0" y="735.6" font-size="12.8" fill="#f4f4f4" textLength="35.6" lengthAdjust="spacingAndGlyphs" stroke="#f4f4f4" stroke-width="0.2">1,0702</text>
<text x="1011.6" y="735.6" font-size="12.8" fill="#f4f4f4" textLength="35.6" lengthAdjust="spacingAndGlyphs" stroke="#f4f4f4" stroke-width="0.2">0,5926</text>
<text x="1073.2" y="735.6" font-size="12.8" fill="#f4f4f4" textLength="35.6" lengthAdjust="spacingAndGlyphs" stroke="#f4f4f4" stroke-width="0.2">0,4140</text>
<text x="1134.8" y="735.6" font-size="12.8" fill="#f4f4f4" textLength="35.6" lengthAdjust="spacingAndGlyphs" stroke="#f4f4f4" stroke-width="0.2">0,2328</text>
<text x="1196.4" y="735.6" font-size="12.8" fill="#f4f4f4" textLength="35.6" lengthAdjust="spacingAndGlyphs" stroke="#f4f4f4" stroke-width="0.2">0,3300</text>
<text x="1258.0" y="735.6" font-size="12.8" fill="#f4f4f4" textLength="35.6" lengthAdjust="spacingAndGlyphs" stroke="#f4f4f4" stroke-width="0.2">0,4208</text>
<text x="1319.6" y="735.6" font-size="12.8" fill="#f4f4f4" textLength="35.6" lengthAdjust="spacingAndGlyphs" stroke="#f4f4f4" stroke-width="0.2">0,4264</text>
<text x="1381.2" y="735.6" font-size="12.8" fill="#f4f4f4" textLength="35.6" lengthAdjust="spacingAndGlyphs" stroke="#f4f4f4" stroke-width="0.2">0,6540</text>
<text x="1442.8" y="735.6" font-size="12.8" fill="#f4f4f4" textLength="35.6" lengthAdjust="spacingAndGlyphs" stroke="#f4f4f4" stroke-width="0.2">0,5121</text>
<text x="1504.4" y="735.6" font-size="12.8" fill="#f4f4f4" textLength="35.6" lengthAdjust="spacingAndGlyphs" stroke="#f4f4f4" stroke-width="0.2">0,4813</text>
<rect x="586.00" y="741.80" width="969.00" height="22.00" fill="#818181" />
<text x="595.2" y="757.6" font-size="12.4" fill="#f4f4f4" textLength="36.5" lengthAdjust="spacingAndGlyphs" font-weight="bold">ΔE ITP</text>
<text x="703.6" y="757.6" font-size="12.8" fill="#f4f4f4" textLength="42.2" lengthAdjust="spacingAndGlyphs" stroke="#f4f4f4" stroke-width="0.2">75,5918</text>
<text x="765.2" y="757.6" font-size="12.8" fill="#f4f4f4" textLength="42.2" lengthAdjust="spacingAndGlyphs" stroke="#f4f4f4" stroke-width="0.2">21,8514</text>
<text x="826.8" y="757.6" font-size="12.8" fill="#f4f4f4" textLength="42.2" lengthAdjust="spacingAndGlyphs" stroke="#f4f4f4" stroke-width="0.2">15,5712</text>
<text x="888.4" y="757.6" font-size="12.8" fill="#f4f4f4" textLength="42.2" lengthAdjust="spacingAndGlyphs" stroke="#f4f4f4" stroke-width="0.2">10,0553</text>
<text x="950.0" y="757.6" font-size="12.8" fill="#f4f4f4" textLength="35.6" lengthAdjust="spacingAndGlyphs" stroke="#f4f4f4" stroke-width="0.2">6,0396</text>
<text x="1011.6" y="757.6" font-size="12.8" fill="#f4f4f4" textLength="35.6" lengthAdjust="spacingAndGlyphs" stroke="#f4f4f4" stroke-width="0.2">2,4526</text>
<text x="1073.2" y="757.6" font-size="12.8" fill="#f4f4f4" textLength="35.6" lengthAdjust="spacingAndGlyphs" stroke="#f4f4f4" stroke-width="0.2">1,8435</text>
<text x="1134.8" y="757.6" font-size="12.8" fill="#f4f4f4" textLength="35.6" lengthAdjust="spacingAndGlyphs" stroke="#f4f4f4" stroke-width="0.2">0,7200</text>
<text x="1196.4" y="757.6" font-size="12.8" fill="#f4f4f4" textLength="35.6" lengthAdjust="spacingAndGlyphs" stroke="#f4f4f4" stroke-width="0.2">0,8927</text>
<text x="1258.0" y="757.6" font-size="12.8" fill="#f4f4f4" textLength="35.6" lengthAdjust="spacingAndGlyphs" stroke="#f4f4f4" stroke-width="0.2">1,3014</text>
<text x="1319.6" y="757.6" font-size="12.8" fill="#f4f4f4" textLength="35.6" lengthAdjust="spacingAndGlyphs" stroke="#f4f4f4" stroke-width="0.2">1,2974</text>
<text x="1381.2" y="757.6" font-size="12.8" fill="#f4f4f4" textLength="35.6" lengthAdjust="spacingAndGlyphs" stroke="#f4f4f4" stroke-width="0.2">1,7640</text>
<text x="1442.8" y="757.6" font-size="12.8" fill="#f4f4f4" textLength="35.6" lengthAdjust="spacingAndGlyphs" stroke="#f4f4f4" stroke-width="0.2">1,6295</text>
<text x="1504.4" y="757.6" font-size="12.8" fill="#f4f4f4" textLength="35.6" lengthAdjust="spacingAndGlyphs" stroke="#f4f4f4" stroke-width="0.2">1,5630</text>
</g>
<rect x="586.00" y="763.70" width="969.00" height="11.80" fill="#5e5e5e" />
<rect x="600.50" y="764.50" width="645.50" height="10.00" fill="#3d3d3d" rx="5"/>
<rect x="586.70" y="764.20" width="11.30" height="10.80" fill="#8a8a8a" />
<path d="M595 766v7.4l-6-3.7z" fill="#2e2e2e"/>
<rect x="1543.50" y="764.20" width="10.50" height="10.80" fill="#8a8a8a" />
<path d="M1546 766v7.4l6-3.7z" fill="#2e2e2e"/>
<line x1="585.50" y1="563.00" x2="585.50" y2="776.00" stroke="#1c1c1c" stroke-width="1" shape-rendering="crispEdges"/>
<rect x="0.00" y="800.00" width="1290.00" height="61.00" fill="#3e3e3e" />
<path d="M-2.2 861V804q0-4 4-4h49.3q4 0 4 4V861z" fill="url(#gbtn)"/>
<rect x="3.0" y="805" width="47" height="36" rx="4" fill="rgb(0,0,0)"/>
<rect x="3.0" y="805" width="47" height="36" rx="4" fill="none" stroke="url(#gins)" stroke-width="1"/>
<text x="26.6" y="855.8" font-size="10" fill="#2c2c2c" text-anchor="middle" textLength="5.6" lengthAdjust="spacingAndGlyphs" font-weight="bold">0</text>
<path d="M56.8 861V804q0-4 4-4h49.3q4 0 4 4V861z" fill="url(#gbtn)"/>
<rect x="62.0" y="805" width="47" height="36" rx="4" fill="rgb(13,13,13)"/>
<rect x="62.0" y="805" width="47" height="36" rx="4" fill="none" stroke="url(#gins)" stroke-width="1"/>
<text x="85.6" y="855.8" font-size="10" fill="#2c2c2c" text-anchor="middle" textLength="5.6" lengthAdjust="spacingAndGlyphs" font-weight="bold">5</text>
<path d="M115.9 861V804q0-4 4-4h49.3q4 0 4 4V861z" fill="url(#gbtn)"/>
<rect x="121.1" y="805" width="47" height="36" rx="4" fill="rgb(26,26,26)"/>
<rect x="121.1" y="805" width="47" height="36" rx="4" fill="none" stroke="url(#gins)" stroke-width="1"/>
<text x="144.7" y="855.8" font-size="10" fill="#2c2c2c" text-anchor="middle" textLength="11.2" lengthAdjust="spacingAndGlyphs" font-weight="bold">10</text>
<path d="M174.9 861V804q0-4 4-4h49.3q4 0 4 4V861z" fill="url(#gbtn)"/>
<rect x="180.1" y="805" width="47" height="36" rx="4" fill="rgb(38,38,38)"/>
<rect x="180.1" y="805" width="47" height="36" rx="4" fill="none" stroke="url(#gins)" stroke-width="1"/>
<text x="203.8" y="855.8" font-size="10" fill="#2c2c2c" text-anchor="middle" textLength="11.2" lengthAdjust="spacingAndGlyphs" font-weight="bold">15</text>
<path d="M234.0 861V804q0-4 4-4h49.3q4 0 4 4V861z" fill="url(#gbtn)"/>
<rect x="239.2" y="805" width="47" height="36" rx="4" fill="rgb(51,51,51)"/>
<rect x="239.2" y="805" width="47" height="36" rx="4" fill="none" stroke="url(#gins)" stroke-width="1"/>
<text x="262.8" y="855.8" font-size="10" fill="#2c2c2c" text-anchor="middle" textLength="11.2" lengthAdjust="spacingAndGlyphs" font-weight="bold">20</text>
<path d="M293.1 861V804q0-4 4-4h49.3q4 0 4 4V861z" fill="url(#gbtn)"/>
<rect x="298.2" y="805" width="47" height="36" rx="4" fill="rgb(64,64,64)"/>
<rect x="298.2" y="805" width="47" height="36" rx="4" fill="none" stroke="url(#gins)" stroke-width="1"/>
<text x="321.9" y="855.8" font-size="10" fill="#2c2c2c" text-anchor="middle" textLength="11.2" lengthAdjust="spacingAndGlyphs" font-weight="bold">25</text>
<path d="M352.1 861V804q0-4 4-4h49.3q4 0 4 4V861z" fill="url(#gbtn)"/>
<rect x="357.3" y="805" width="47" height="36" rx="4" fill="rgb(76,76,76)"/>
<rect x="357.3" y="805" width="47" height="36" rx="4" fill="none" stroke="url(#gins)" stroke-width="1"/>
<text x="380.9" y="855.8" font-size="10" fill="#2c2c2c" text-anchor="middle" textLength="11.2" lengthAdjust="spacingAndGlyphs" font-weight="bold">30</text>
<path d="M411.1 861V804q0-4 4-4h49.3q4 0 4 4V861z" fill="url(#gbtn)"/>
<rect x="416.3" y="805" width="47" height="36" rx="4" fill="rgb(89,89,89)"/>
<rect x="416.3" y="805" width="47" height="36" rx="4" fill="none" stroke="url(#gins)" stroke-width="1"/>
<text x="439.9" y="855.8" font-size="10" fill="#2c2c2c" text-anchor="middle" textLength="11.2" lengthAdjust="spacingAndGlyphs" font-weight="bold">35</text>
<path d="M470.2 861V804q0-4 4-4h49.3q4 0 4 4V861z" fill="url(#gbtn)"/>
<rect x="475.4" y="805" width="47" height="36" rx="4" fill="rgb(102,102,102)"/>
<rect x="475.4" y="805" width="47" height="36" rx="4" fill="none" stroke="url(#gins)" stroke-width="1"/>
<text x="499.0" y="855.8" font-size="10" fill="#2c2c2c" text-anchor="middle" textLength="11.2" lengthAdjust="spacingAndGlyphs" font-weight="bold">40</text>
<path d="M529.2 861V804q0-4 4-4h49.3q4 0 4 4V861z" fill="url(#gbtn)"/>
<rect x="534.4" y="805" width="47" height="36" rx="4" fill="rgb(115,115,115)"/>
<rect x="534.4" y="805" width="47" height="36" rx="4" fill="none" stroke="url(#gins)" stroke-width="1"/>
<text x="558.0" y="855.8" font-size="10" fill="#2c2c2c" text-anchor="middle" textLength="11.2" lengthAdjust="spacingAndGlyphs" font-weight="bold">45</text>
<path d="M588.3 861V804q0-4 4-4h49.3q4 0 4 4V861z" fill="url(#gbtn)"/>
<rect x="593.5" y="805" width="47" height="36" rx="4" fill="rgb(128,128,128)"/>
<rect x="593.5" y="805" width="47" height="36" rx="4" fill="none" stroke="url(#gins)" stroke-width="1"/>
<text x="617.1" y="855.8" font-size="10" fill="#2c2c2c" text-anchor="middle" textLength="11.2" lengthAdjust="spacingAndGlyphs" font-weight="bold">50</text>
<path d="M647.3 861V804q0-4 4-4h49.3q4 0 4 4V861z" fill="url(#gbtn)"/>
<rect x="652.5" y="805" width="47" height="36" rx="4" fill="rgb(140,140,140)"/>
<rect x="652.5" y="805" width="47" height="36" rx="4" fill="none" stroke="url(#gins)" stroke-width="1"/>
<text x="676.1" y="855.8" font-size="10" fill="#2c2c2c" text-anchor="middle" textLength="11.2" lengthAdjust="spacingAndGlyphs" font-weight="bold">55</text>
<path d="M706.4 861V804q0-4 4-4h49.3q4 0 4 4V861z" fill="url(#gbtn)"/>
<rect x="711.6" y="805" width="47" height="36" rx="4" fill="rgb(153,153,153)"/>
<rect x="711.6" y="805" width="47" height="36" rx="4" fill="none" stroke="url(#gins)" stroke-width="1"/>
<text x="735.2" y="855.8" font-size="10" fill="#2c2c2c" text-anchor="middle" textLength="11.2" lengthAdjust="spacingAndGlyphs" font-weight="bold">60</text>
<path d="M765.4 861V804q0-4 4-4h49.3q4 0 4 4V861z" fill="url(#gbtn)"/>
<rect x="770.6" y="805" width="47" height="36" rx="4" fill="rgb(166,166,166)"/>
<rect x="770.6" y="805" width="47" height="36" rx="4" fill="none" stroke="url(#gins)" stroke-width="1"/>
<text x="794.2" y="855.8" font-size="10" fill="#2c2c2c" text-anchor="middle" textLength="11.2" lengthAdjust="spacingAndGlyphs" font-weight="bold">65</text>
<path d="M824.5 861V804q0-4 4-4h49.3q4 0 4 4V861z" fill="url(#gbtn)"/>
<rect x="829.7" y="805" width="47" height="36" rx="4" fill="rgb(178,178,178)"/>
<rect x="829.7" y="805" width="47" height="36" rx="4" fill="none" stroke="url(#gins)" stroke-width="1"/>
<text x="853.3" y="855.8" font-size="10" fill="#2c2c2c" text-anchor="middle" textLength="11.2" lengthAdjust="spacingAndGlyphs" font-weight="bold">70</text>
<path d="M883.5 861V804q0-4 4-4h49.3q4 0 4 4V861z" fill="url(#gbtn)"/>
<rect x="888.8" y="805" width="47" height="36" rx="4" fill="rgb(191,191,191)"/>
<rect x="888.8" y="805" width="47" height="36" rx="4" fill="none" stroke="url(#gins)" stroke-width="1"/>
<text x="912.3" y="855.8" font-size="10" fill="#2c2c2c" text-anchor="middle" textLength="11.2" lengthAdjust="spacingAndGlyphs" font-weight="bold">75</text>
<path d="M942.6 861V804q0-4 4-4h49.3q4 0 4 4V861z" fill="url(#gbtn)"/>
<rect x="947.8" y="805" width="47" height="36" rx="4" fill="rgb(204,204,204)"/>
<rect x="947.8" y="805" width="47" height="36" rx="4" fill="none" stroke="url(#gins)" stroke-width="1"/>
<text x="971.4" y="855.8" font-size="10" fill="#2c2c2c" text-anchor="middle" textLength="11.2" lengthAdjust="spacingAndGlyphs" font-weight="bold">80</text>
<path d="M1001.6 861V804q0-4 4-4h49.3q4 0 4 4V861z" fill="url(#gbtn)"/>
<rect x="1006.8" y="805" width="47" height="36" rx="4" fill="rgb(217,217,217)"/>
<rect x="1006.8" y="805" width="47" height="36" rx="4" fill="none" stroke="url(#gins)" stroke-width="1"/>
<text x="1030.4" y="855.8" font-size="10" fill="#2c2c2c" text-anchor="middle" textLength="11.2" lengthAdjust="spacingAndGlyphs" font-weight="bold">85</text>
<path d="M1060.7 861V804q0-4 4-4h49.3q4 0 4 4V861z" fill="url(#gbtn)"/>
<rect x="1065.9" y="805" width="47" height="36" rx="4" fill="rgb(230,230,230)"/>
<rect x="1065.9" y="805" width="47" height="36" rx="4" fill="none" stroke="url(#gins)" stroke-width="1"/>
<text x="1089.5" y="855.8" font-size="10" fill="#2c2c2c" text-anchor="middle" textLength="11.2" lengthAdjust="spacingAndGlyphs" font-weight="bold">90</text>
<path d="M1119.8 861V804q0-4 4-4h49.3q4 0 4 4V861z" fill="url(#gbtn)"/>
<rect x="1125.0" y="805" width="47" height="36" rx="4" fill="rgb(242,242,242)"/>
<rect x="1125.0" y="805" width="47" height="36" rx="4" fill="none" stroke="url(#gins)" stroke-width="1"/>
<text x="1148.5" y="855.8" font-size="10" fill="#2c2c2c" text-anchor="middle" textLength="11.2" lengthAdjust="spacingAndGlyphs" font-weight="bold">95</text>
<path d="M1180 861V804q0-4 4-4h49.2q4 0 4 4V861z" fill="url(#gsel)"/>
<rect x="1185.2" y="805.1" width="46.8" height="36.1" rx="4" fill="#ffffff"/>
<text x="1208.8" y="855.8" font-size="10.3" fill="#ffffff" text-anchor="middle" textLength="18.3" lengthAdjust="spacingAndGlyphs" font-weight="bold">100</text>
<path d="M1240 818V803.5q0-3.5 3.5-3.5h41q3.5 0 3.5 3.5V818z" fill="url(#gbtnT)"/>
<rect x="1240.00" y="819.00" width="48.00" height="42.00" fill="url(#gbtn)" />
<line x1="1240.00" y1="818.50" x2="1288.00" y2="818.50" stroke="#3a3a3a" stroke-width="1" />
<circle cx="1264.4" cy="809.2" r="7.4" fill="url(#gcirc)"/><path d="M1259.3 811.6h10.2l-5.1-5.2z" fill="#363636"/>
<rect x="1249.6" y="825.3" width="28.9" height="28.4" rx="3.5" fill="url(#gstop)" stroke="#2a2a2a" stroke-width="2.2"/>
<rect x="1257.00" y="833.20" width="13.90" height="6.50" fill="#161616" />
<rect x="1257.00" y="839.70" width="13.90" height="6.60" fill="#000000" />
<rect x="1289.00" y="800.00" width="269.00" height="61.00" fill="#3a3a3a" />
<path d="M1289.6 830V803q0-3 3-3H1334.8999999999999V830z" fill="url(#gbtnT)"/>
<circle cx="1312.2" cy="815" r="9.8" fill="url(#gcirc)"/>
<rect x="1308.10" y="811.10" width="8.20" height="7.80" fill="#343434" />
<rect x="1335.80" y="800.00" width="44.10" height="30.00" fill="url(#gbtnT)" />
<circle cx="1357.7" cy="815" r="9.8" fill="url(#gcirc)"/>
<path d="M1354.9 810.4v9.6l8.4-4.8z" fill="#303030"/>
<rect x="1380.80" y="800.00" width="43.90" height="30.00" fill="url(#gbtnT)" />
<circle cx="1402.7" cy="815" r="9.8" fill="url(#gcirc)"/>
<g fill="none" stroke="#303030" stroke-width="1.9"><path d="M1399.5 810.8h-2.2v9.6h2.2"/><path d="M1405.9 810.8h2.2v9.6h-2.2"/></g>
<rect x="1400.50" y="814.80" width="1.60" height="1.60" fill="#303030" />
<rect x="1403.30" y="814.80" width="1.60" height="1.60" fill="#303030" />
<rect x="1425.60" y="800.00" width="44.30" height="30.00" fill="url(#gbtnT)" />
<circle cx="1447.8" cy="815" r="9.8" fill="url(#gcirc)"/>
<path d="M1447.8 815.3c-2-2-3-2.500-4.200-2.500a2.500 2.500 0 0 0 0 5c1.200 0 2.200-.5 4.200-2.500c2-2 3-2.500 4.200-2.500a2.500 2.500 0 0 1 0 5c-1.200 0-2.200-.5-4.200-2.500z" fill="none" stroke="#303030" stroke-width="1.5"/>
<rect x="1470.80" y="800.00" width="43.90" height="30.00" fill="url(#gbtnT)" />
<circle cx="1493.0" cy="815" r="9.8" fill="url(#gcirc)"/>
<g fill="none" stroke="#303030" stroke-width="2"><path d="M1488.4 814.4a4.7 4.7 0 0 1 7.6-3"/><path d="M1497.6 815.8a4.7 4.7 0 0 1-7.6 3"/></g>
<path d="M1493.8 812.6h5v-5z M1492.2 817.6h-5v5z" fill="#303030"/>
<rect x="1515.60" y="800.00" width="42.40" height="30.00" fill="url(#gbtnT)" />
<circle cx="1538.9" cy="815" r="9.8" fill="url(#gcirc)"/>
<path d="M1289.6 861V835q0-3.500 3.5-3.500H1425V861z" fill="url(#gbtnB)"/>
<rect x="1426.30" y="831.50" width="131.70" height="29.50" fill="url(#gbtnB)" />
<circle cx="1319.7" cy="845.8" r="9.8" fill="url(#gcirc)"/><circle cx="1532.9" cy="845.8" r="9.8" fill="url(#gcirc)"/>
<g fill="none" stroke="#303030" stroke-width="1.4"><path d="M1319.3 841.300l-4 4.500l4 4.500M1323.700 841.300l-4 4.500l4 4.500"/><path d="M1529.300 841.300l4 4.500l-4 4.500M1533.700 841.300l4 4.500l-4 4.500"/></g>
<text x="1347.3" y="853.9" font-size="21.4" fill="#2e2e2e" textLength="49.4" lengthAdjust="spacingAndGlyphs" stroke="#2e2e2e" stroke-width="0.35" filter="url(#sh)">Back</text>
<text x="1453.8" y="853.9" font-size="21.4" fill="#2e2e2e" textLength="51.5" lengthAdjust="spacingAndGlyphs" stroke="#2e2e2e" stroke-width="0.35" filter="url(#sh)">Next</text>
</svg></body></html>
